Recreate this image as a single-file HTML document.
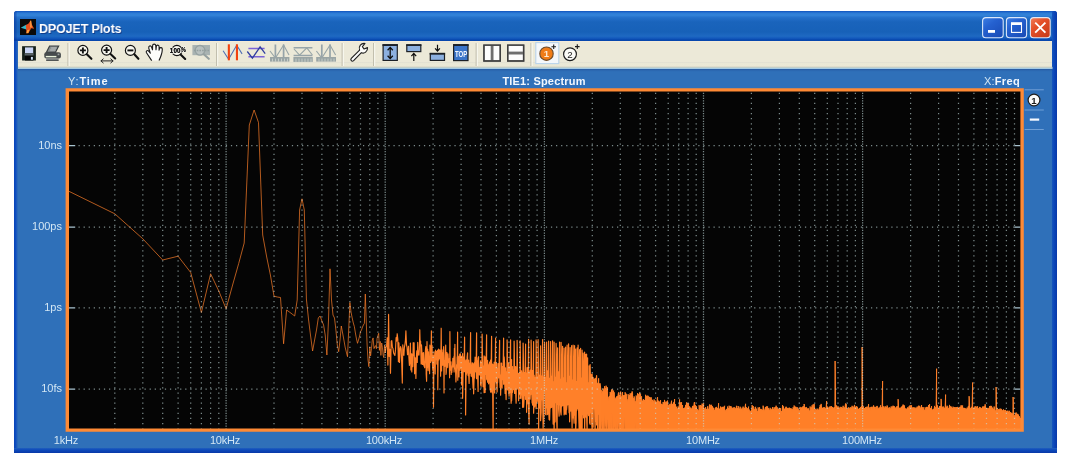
<!DOCTYPE html>
<html lang="en">
<head>
<meta charset="utf-8">
<title>DPOJET Plots</title>
<style>
html,body{margin:0;padding:0;background:#fff;}
body{width:1068px;height:463px;position:relative;overflow:hidden;font-family:"Liberation Sans",Arial,sans-serif;}
.win{position:absolute;left:14px;top:11px;width:1043px;height:442px;background:#2f70b9;overflow:hidden;border-radius:3px 3px 0 0;}
.bl{position:absolute;left:0;top:30px;width:4px;bottom:0;background:linear-gradient(90deg,#0a44b6 0,#0d4fc2 50%,#2462b8 75%,#2d6cb8 100%);}
.br{position:absolute;right:0;top:0;width:4.6px;height:100%;background:linear-gradient(90deg,#1656bd 0,#0b46b8 45%,#0838a8 100%);}
.bb{position:absolute;left:0;bottom:0;width:100%;height:5px;background:linear-gradient(180deg,#215fbd 0,#0c49ba 40%,#0838a8 100%);}
.title{position:absolute;left:0;top:0;width:100%;height:30px;
 background:linear-gradient(90deg,rgba(0,40,150,.5) 0,rgba(0,40,150,.28) 2px,rgba(0,40,150,0) 3.5px),linear-gradient(180deg,#0f52bd 0,#2d7bd6 7%,#3383d8 14%,#2470ca 22%,#1a64bc 36%,#1761b8 70%,#1e69c2 84%,#1359bc 91%,#0848ae 96%,#0646ac 100%);}
.title .cap{position:absolute;left:24.8px;top:9.5px;color:#fff;font-weight:bold;font-size:13.4px;line-height:16px;letter-spacing:-0.15px;white-space:nowrap;transform:scaleX(0.933);transform-origin:0 0;will-change:transform;text-shadow:1px 1px 0 rgba(10,30,100,.55);}
.toolbar{position:absolute;left:4px;top:30px;width:1034.6px;height:27px;background:linear-gradient(180deg,#f7ecd9 0,#ece9d8 1.5px,#ece9d8 21px,#e2e0d2 21.6px,#eae8d6 22.4px,#ebe9d7 100%);}
.client{position:absolute;left:4px;top:58px;right:4.6px;bottom:5px;background:linear-gradient(180deg,#2a66b0 0,#2f70b9 3px);}
.full{will-change:transform;position:absolute;left:0;top:0;width:1068px;height:463px;pointer-events:none;}
.lb{will-change:transform;position:absolute;color:#d2e6f4;font-size:11px;line-height:12px;white-space:nowrap;}
.lb b{color:#f2f8ff;}
</style>
</head>
<body>
<div class="win">
  <div class="title">
    <div class="cap">DPOJET Plots</div>
  </div>
  <div class="toolbar"></div>
  <div class="client"></div>
  <div class="bl"></div><div class="br"></div><div class="bb"></div>
</div>

<svg class="full" width="1068" height="463" viewBox="0 0 1068 463">
  <defs><clipPath id="pc"><rect x="68.0" y="90.5" width="953.4" height="339.0"/></clipPath></defs>
  <rect x="66.6" y="89.2" width="956.2" height="341.6" fill="#050505"/>
  <g clip-path="url(#pc)">
    <g fill="none" stroke="#ff8029" stroke-linejoin="round">
      <path d="M461.6,356.7 462.1,366.7 462.6,353.7 463.1,368.4 463.6,357.2 464.1,364.4 464.6,337.2 465.1,360.7 465.6,370.7 466.1,359.8 466.6,368.8 467.1,357.1 467.6,352.9 468.1,369.2 468.6,360.2 469.1,365.0 469.6,363.2 470.1,364.4 470.6,332.6 471.1,362.7 471.6,368.2 472.1,372.5 472.6,362.8 473.1,363.8 473.6,380.1 474.1,363.6 474.6,362.5 475.1,357.1 475.6,359.7 476.1,369.5 476.6,332.8 477.1,365.3 477.6,360.5 478.1,358.2 478.6,356.7 479.1,370.2 479.6,367.5 480.1,369.1 480.6,360.9 481.1,368.0 481.6,362.3 482.1,334.0 482.6,368.5 483.1,366.1 483.6,366.0 484.1,355.9 484.6,368.4 485.1,356.8 485.6,364.4 486.1,367.8 486.6,334.8 487.1,370.2 487.6,360.4 488.1,363.8 488.6,369.4 489.1,372.8 489.6,362.2 490.1,365.5 490.6,360.0 491.1,368.8 491.6,336.4 492.1,371.9 492.6,364.2 493.1,364.5 493.6,365.8 494.1,362.2 494.6,368.7 495.1,367.1 495.6,338.1 496.1,374.5 496.6,363.3 497.1,377.6 497.6,368.1 498.1,363.7 498.6,367.5 499.1,366.2 499.6,340.3 500.1,374.9 500.6,376.6 501.1,363.2 501.6,363.1 502.1,366.4 502.6,366.8 503.1,371.0 503.6,338.1 504.1,356.9 504.6,363.7 505.1,372.0 505.6,367.9 506.1,373.3 506.6,371.5 507.1,339.9 507.6,364.6 508.1,367.7 508.6,363.1 509.1,366.8 509.6,371.0 510.1,359.3 510.6,339.9 511.1,380.1 511.6,359.5 512.1,373.9 512.6,366.6 513.1,377.1 513.6,369.5 514.1,341.2 514.6,373.8 515.1,374.2 515.6,366.7 516.1,367.4 516.6,367.1 517.1,340.3 517.6,375.3 518.1,373.3 518.6,377.0 519.1,373.1 519.6,377.7 520.1,340.8 520.6,373.6 521.1,370.9 521.6,370.9 522.1,372.7 522.6,378.7 523.1,343.1 523.6,375.3 524.1,372.3 524.6,375.1 525.1,370.9 525.6,344.0 526.1,372.8 526.6,379.2 527.1,367.5 527.6,375.2 528.1,375.1 528.6,339.3 529.1,371.8 529.6,380.9 530.1,370.2 530.6,377.3 531.1,340.2 531.6,373.0 532.1,370.3 532.6,374.9 533.1,380.3 533.6,341.7 534.1,375.0 534.6,381.6 535.1,378.1 535.6,377.1 536.1,339.9 536.6,372.5 537.1,378.1 537.6,376.6 538.1,339.7 538.6,381.7 539.1,377.5 539.6,375.2 540.1,373.5 540.6,345.8 541.1,375.8 541.6,376.3 542.1,380.8 542.6,339.6 543.1,378.1 543.6,376.8 544.1,374.0 544.6,342.6 545.1,377.4 545.6,383.1 546.1,374.1 546.6,342.0 547.1,370.7 547.6,382.4 548.1,381.0 548.6,341.2 549.1,381.4 549.6,378.2 550.1,377.8 550.6,341.5 551.1,376.1 551.6,377.1 552.1,370.9 552.6,340.8 553.1,382.2 553.6,381.6 554.1,342.0 554.6,377.9 555.1,380.2 555.6,377.1 556.1,343.4 556.6,375.0 557.1,379.1 557.6,347.9 558.1,371.7 558.6,379.3 559.1,380.2 559.6,342.2 560.1,379.6 560.6,379.2 561.1,342.3 561.6,376.4 562.1,381.2 562.6,346.3 563.1,385.2 563.6,377.6 564.1,348.2 564.6,381.3 565.1,379.7 565.6,347.0 566.1,382.7 566.6,384.3 567.1,345.2 567.6,385.3 568.1,381.3 568.6,343.9 569.1,381.3 569.6,376.1 570.1,347.5 570.6,382.4 571.1,378.2 571.6,345.7 572.1,382.6 572.6,379.8 573.1,345.2 573.6,382.7 574.1,384.3 574.6,345.7 575.1,382.1 575.6,349.2 576.1,381.4 576.6,387.2 577.1,347.9 577.6,385.1 578.1,345.2 578.6,386.2 579.1,378.1 579.6,349.7 580.1,388.4 580.6,348.4 581.1,387.9 581.6,377.9 582.1,350.0 582.6,382.3 583.1,353.0 583.6,387.1 584.1,378.0 584.6,352.0 585.1,384.8 585.6,354.3 586.1,385.3 586.6,354.1 587.1,379.9 587.6,357.8 588.1,385.6 588.6,382.5 589.1,365.8 589.6,382.3 590.1,364.5 590.6,387.7 591.1,374.6 591.6,381.1 592.1,373.8 592.6,384.4 593.1,377.3 593.6,382.5 594.1,379.3 594.6,385.2 595.1,378.3 595.6,385.9 596.1,380.2 596.6,375.7 597.1,383.0 597.6,387.9 598.1,391.1 598.6,378.5 599.1,386.0 599.6,383.8 600.1,383.5 600.6,388.6 601.1,389.9 601.6,392.7 602.1,395.8 602.6,391.4 603.1,388.5 603.6,389.8 604.1,392.7 604.6,386.2 605.1,389.9 605.6,388.1 606.1,385.7 606.6,391.7 607.1,387.0 607.6,391.6 608.1,396.7 608.6,400.9 609.1,399.3 609.6,396.1 610.1,392.1 610.6,393.4 611.1,392.5 611.6,389.7 612.1,389.4 612.6,394.3 613.1,396.3 613.6,390.6 614.1,392.3 614.6,401.9 615.1,398.8 615.6,398.6 616.1,397.1 616.6,396.5 617.1,398.9 617.6,396.1 618.1,394.3 618.6,392.4 619.1,397.6 619.6,395.1 620.1,393.5 620.6,391.6 621.1,398.1 621.6,396.5 622.1,392.9 622.6,392.0 623.1,395.8 623.6,395.4 624.1,395.1 624.6,395.7 625.1,392.3 625.6,394.6 626.1,393.7 626.6,396.8 627.1,399.3 627.6,403.0 628.1,394.2 628.6,398.5 629.1,397.1 629.6,395.1 630.1,393.3 630.6,395.7 631.1,393.3 631.6,393.0 632.1,391.4 632.6,393.7 633.1,398.0 633.6,399.6 634.1,396.4 634.6,400.7 635.1,403.9 635.6,401.4 636.1,395.6 636.6,396.7 637.1,397.5 637.6,393.2 638.1,395.8 638.6,394.3 639.1,394.8 639.6,392.5 640.1,397.0 640.6,393.8 641.1,397.8 641.6,396.3 642.1,400.9 642.6,400.9 643.1,399.7 643.6,399.0 644.1,401.2 644.6,400.0 645.1,403.4 645.6,394.8 646.1,399.9 646.6,396.2 647.1,395.6 647.6,398.0 648.1,395.8 648.6,398.8 649.1,401.0 649.6,396.9 650.1,402.3 650.6,397.7 651.1,397.3 651.6,401.9 652.1,402.8 652.6,399.8 653.1,400.8 653.6,403.4 654.1,399.4 654.6,404.9 655.1,400.5 655.6,403.0 656.1,401.9 656.6,402.6 657.1,399.4 657.6,397.2 658.1,404.2 658.6,400.7 659.1,405.1 659.6,401.7 660.1,402.1 660.6,400.2 661.1,405.1 661.6,403.8 662.1,409.6 662.6,404.4 663.1,402.0 663.6,404.2 664.1,404.1 664.6,399.9 665.1,402.0 665.6,405.5 666.1,401.4 666.6,402.6 667.1,402.8 667.6,400.6 668.1,404.7 668.6,407.7 669.1,408.3 669.6,404.6 670.1,403.8 670.6,408.6 671.1,403.1 671.6,400.7 672.1,404.4 672.6,403.9 673.1,404.8 673.6,402.4 674.1,404.4 674.6,399.0 675.1,405.0 675.6,404.3 676.1,408.8 676.6,406.7 677.1,408.4 677.6,409.1 678.1,406.5 678.6,408.0 679.1,407.5 679.6,399.4 680.1,404.4 680.6,402.4 681.1,403.7 681.6,402.2 682.1,408.3 682.6,405.0 683.1,408.0 683.6,408.9 684.1,410.1 684.6,407.7 685.1,409.4 685.6,405.0 686.1,405.5 686.6,402.4 687.1,403.3 687.6,403.4 688.1,405.0 688.6,403.4 689.1,407.9 689.6,406.4 690.1,410.0 690.6,407.6 691.1,408.4 691.6,409.1 692.1,408.1 692.6,405.9 693.1,406.2 693.6,405.9 694.1,402.8 694.6,402.1 695.1,405.4 695.6,405.2 696.1,409.0 696.6,406.3 697.1,409.0 697.6,409.4 698.1,410.6 698.6,410.7 699.1,405.2 699.6,408.3 700.1,407.3 700.6,405.1 701.1,410.1 701.6,405.7 702.1,403.6 702.6,405.4 703.1,410.2 703.6,403.5 704.1,408.6 704.6,408.9 705.1,408.0 705.6,407.2 706.1,413.5 706.6,409.1 707.1,409.1 707.6,406.3 708.1,410.3 708.6,408.9 709.1,406.9 709.6,404.6 710.1,404.8 710.6,406.5 711.1,407.7 711.6,404.8 712.1,406.3 712.6,406.6 713.1,407.8 713.6,408.0 714.1,410.8 714.6,409.9 715.1,407.9 715.6,407.7 716.1,407.4 716.6,407.1 717.1,408.0 717.6,408.6 718.1,409.5 718.6,403.2 719.1,409.2 719.6,408.7 720.1,410.0 720.6,406.5 721.1,407.5 721.6,408.0 722.1,406.9 722.6,407.2 723.1,407.1 723.6,407.4 724.1,406.5 724.6,405.8 725.1,410.1 725.6,412.3 726.1,409.7 726.6,408.9 727.1,412.6 727.6,406.5 728.1,407.9 728.6,408.7 729.1,405.7 729.6,407.8 730.1,409.9 730.6,406.3 731.1,406.4 731.6,410.1 732.1,407.9 732.6,409.4 733.1,407.6 733.6,409.2 734.1,407.1 734.6,409.6 735.1,409.3 735.6,408.4 736.1,407.8 736.6,405.8 737.1,408.0 737.6,409.4 738.1,406.0 738.6,408.3 739.1,409.1 739.6,408.8 740.1,406.7 740.6,410.1 741.1,409.2 741.6,409.2 742.1,407.7 742.6,411.4 743.1,406.6 743.6,410.9 744.1,408.0 744.6,408.3 745.1,406.8 745.6,403.8 746.1,407.0 746.6,409.5 747.1,408.1 747.6,410.5 748.1,409.1 748.6,406.6 749.1,409.5 749.6,412.5 750.1,411.0 750.6,412.2 751.1,410.2 751.6,409.5 752.1,405.1 752.6,409.0 753.1,406.0 753.6,410.1 754.1,408.9 754.6,410.8 755.1,407.4 755.6,406.8 756.1,408.6 756.6,409.1 757.1,413.9 757.6,411.2 758.1,407.4 758.6,409.3 759.1,410.0 759.6,407.2 760.1,409.1 760.6,409.1 761.1,409.4 761.6,409.3 762.1,410.4 762.6,409.8 763.1,405.7 763.6,409.2 764.1,409.5 764.6,412.3 765.1,408.1 765.6,406.9 766.1,409.9 766.6,406.4 767.1,409.6 767.6,406.4 768.1,408.3 768.6,408.3 769.1,409.5 769.6,410.7 770.1,407.8 770.6,410.5 771.1,409.2 771.6,409.7 772.1,408.9 772.6,407.1 773.1,408.8 773.6,409.6 774.1,407.2 774.6,409.7 775.1,409.2 775.6,407.2 776.1,405.7 776.6,409.1 777.1,407.2 777.6,410.3 778.1,410.1 778.6,409.0 779.1,408.3 779.6,409.3 780.1,408.6 780.6,408.0 781.1,412.4 781.6,411.2 782.1,410.5 782.6,405.1 783.1,409.1 783.6,406.4 784.1,409.9 784.6,408.9 785.1,408.2 785.6,407.5 786.1,406.7 786.6,407.5 787.1,408.8 787.6,408.2 788.1,407.9 788.6,409.5 789.1,407.7 789.6,407.9 790.1,408.1 790.6,408.8 791.1,409.0 791.6,408.6 792.1,412.0 792.6,409.2 793.1,407.3 793.6,408.8 794.1,405.5 794.6,408.1 795.1,406.6 795.6,408.3 796.1,406.9 796.6,410.2 797.1,408.8 797.6,407.4 798.1,408.6 798.6,411.2 799.1,410.2 799.6,411.5 800.1,406.9 800.6,410.2 801.1,407.6 801.6,408.0 802.1,407.0 802.6,408.1 803.1,406.0 803.6,408.2 804.1,404.0 804.6,406.8 805.1,410.0 805.6,407.5 806.1,407.5 806.6,407.3 807.1,408.4 807.6,409.0 808.1,408.6 808.6,408.5 809.1,411.2 809.6,410.6 810.1,406.5 810.6,409.6 811.1,410.8 811.6,407.4 812.1,405.3 812.6,409.5 813.1,404.4 813.6,410.0 814.1,403.9 814.6,410.3 815.1,410.9 815.6,409.1 816.1,411.9 816.6,409.8 817.1,408.6 817.6,410.1 818.1,410.5 818.6,409.7 819.1,408.7 819.6,407.2 820.1,405.1 820.6,406.1 821.1,403.9 821.6,408.4 822.1,408.0 822.6,408.1 823.1,407.4 823.6,407.6 824.1,410.3 824.6,407.3 825.1,408.6 825.6,408.4 826.1,408.1 826.6,401.0 827.1,408.3 827.6,406.6 828.1,407.4 828.6,409.7 829.1,409.6 829.6,407.1 830.1,406.2 830.6,408.6 831.1,408.0 831.6,406.2 832.1,408.4 832.6,407.1 833.1,408.0 833.6,409.0 834.1,407.0 834.6,408.2 835.1,361.0 835.6,408.5 836.1,410.7 836.6,405.4 837.1,406.6 837.6,407.9 838.1,406.4 838.6,409.8 839.1,408.1 839.6,408.6 840.1,406.9 840.6,410.6 841.1,406.9 841.6,407.8 842.1,408.5 842.6,407.8 843.1,405.8 843.6,410.3 844.1,407.7 844.6,407.7 845.1,406.2 845.6,403.5 846.1,404.1 846.6,406.8 847.1,409.3 847.6,409.5 848.1,408.1 848.6,407.5 849.1,407.7 849.6,409.8 850.1,410.4 850.6,407.3 851.1,408.6 851.6,407.6 852.1,405.8 852.6,409.0 853.1,406.7 853.6,409.3 854.1,406.3 854.6,404.9 855.1,407.0 855.6,407.6 856.1,406.0 856.6,406.9 857.1,406.7 857.6,407.8 858.1,409.3 858.6,409.3 859.1,408.6 859.6,408.1 860.1,407.9 860.6,407.2 861.1,406.9 861.6,406.3 862.1,347.0 862.6,407.2 863.1,407.8 863.6,406.4 864.1,408.6 864.6,408.0 865.1,408.8 865.6,407.2 866.1,409.9 866.6,407.3 867.1,406.6 867.6,410.9 868.1,408.1 868.6,404.1 869.1,407.7 869.6,409.4 870.1,407.1 870.6,410.7 871.1,406.9 871.6,408.1 872.1,406.7 872.6,408.9 873.1,409.7 873.6,405.4 874.1,406.8 874.6,407.7 875.1,406.8 875.6,408.4 876.1,409.6 876.6,406.6 877.1,405.9 877.6,408.9 878.1,409.0 878.6,408.4 879.1,407.4 879.6,408.0 880.1,407.4 880.6,405.3 881.1,407.0 881.6,408.8 882.1,407.5 882.6,381.0 883.1,406.9 883.6,406.4 884.1,408.6 884.6,407.6 885.1,406.3 885.6,407.9 886.1,406.7 886.6,408.7 887.1,405.5 887.6,407.4 888.1,408.0 888.6,409.1 889.1,407.2 889.6,407.9 890.1,409.3 890.6,408.4 891.1,406.6 891.6,410.6 892.1,406.3 892.6,408.8 893.1,405.7 893.6,407.1 894.1,406.1 894.6,407.4 895.1,407.5 895.6,408.8 896.1,407.9 896.6,406.9 897.1,406.0 897.6,410.6 898.1,399.2 898.6,408.2 899.1,408.2 899.6,407.9 900.1,408.5 900.6,408.1 901.1,406.9 901.6,407.1 902.1,406.2 902.6,405.7 903.1,404.6 903.6,405.2 904.1,405.3 904.6,407.0 905.1,408.3 905.6,409.2 906.1,408.8 906.6,409.4 907.1,408.2 907.6,407.6 908.1,407.5 908.6,408.4 909.1,406.1 909.6,407.4 910.1,405.1 910.6,408.0 911.1,407.6 911.6,405.3 912.1,408.5 912.6,407.5 913.1,408.3 913.6,407.4 914.1,408.1 914.6,407.8 915.1,407.6 915.6,409.6 916.1,408.9 916.6,407.8 917.1,406.7 917.6,409.0 918.1,406.6 918.6,405.7 919.1,406.3 919.6,406.0 920.1,408.0 920.6,407.7 921.1,406.7 921.6,405.0 922.1,407.2 922.6,409.8 923.1,407.1 923.6,410.0 924.1,409.7 924.6,411.0 925.1,407.3 925.6,409.4 926.1,410.4 926.6,406.9 927.1,409.9 927.6,407.2 928.1,407.4 928.6,405.0 929.1,408.1 929.6,404.1 930.1,409.7 930.6,408.0 931.1,408.5 931.6,406.1 932.1,409.5 932.6,410.2 933.1,409.2 933.6,409.0 934.1,409.4 934.6,405.9 935.1,407.4 935.6,407.5 936.1,408.8 936.6,368.7 937.1,405.6 937.6,405.6 938.1,408.6 938.6,410.3 939.1,408.4 939.6,406.1 940.1,406.0 940.6,407.1 941.1,398.9 941.6,408.7 942.1,406.9 942.6,408.5 943.1,406.4 943.6,407.9 944.1,409.3 944.6,407.7 945.1,408.8 945.6,394.6 946.1,407.8 946.6,406.9 947.1,405.7 947.6,408.1 948.1,408.9 948.6,408.3 949.1,407.5 949.6,404.9 950.1,407.3 950.6,406.3 951.1,407.8 951.6,406.7 952.1,408.1 952.6,408.1 953.1,406.7 953.6,408.2 954.1,408.0 954.6,407.4 955.1,407.1 955.6,408.3 956.1,409.0 956.6,407.3 957.1,407.4 957.6,406.9 958.1,407.7 958.6,408.2 959.1,407.4 959.6,407.2 960.1,409.0 960.6,406.7 961.1,405.2 961.6,406.9 962.1,406.2 962.6,405.5 963.1,408.3 963.6,407.9 964.1,409.4 964.6,407.9 965.1,408.3 965.6,409.8 966.1,408.6 966.6,409.8 967.1,407.7 967.6,408.3 968.1,406.4 968.6,406.3 969.1,396.2 969.6,405.0 970.1,408.3 970.6,408.6 971.1,407.8 971.6,406.8 972.1,408.3 972.6,382.5 973.1,409.0 973.6,407.7 974.1,408.5 974.6,407.5 975.1,406.2 975.6,408.9 976.1,406.5 976.6,407.2 977.1,409.0 977.6,406.3 978.1,407.9 978.6,410.0 979.1,409.5 979.6,406.9 980.1,409.4 980.6,407.4 981.1,409.0 981.6,408.3 982.1,408.6 982.6,406.6 983.1,407.6 983.6,406.5 984.1,407.5 984.6,406.4 985.1,404.3 985.6,408.2 986.1,408.4 986.6,408.3 987.1,407.9 987.6,409.7 988.1,408.6 988.6,408.4 989.1,409.0 989.6,406.1 990.1,406.1 990.6,406.0 991.1,406.9 991.6,405.9 992.1,409.5 992.6,407.6 993.1,409.9 993.6,408.8 994.1,406.5 994.6,408.9 995.1,410.3 995.6,411.2 996.1,387.0 996.6,409.0 997.1,408.1 997.6,411.8 998.1,410.2 998.6,409.2 999.1,409.9 999.6,409.4 1000.1,408.5 1000.6,411.1 1001.1,409.1 1001.6,409.2 1002.1,410.3 1002.6,411.1 1003.1,409.9 1003.6,409.4 1004.1,410.0 1004.6,411.4 1005.1,412.2 1005.6,409.9 1006.1,411.4 1006.6,411.0 1007.1,413.2 1007.6,410.7 1008.1,412.3 1008.6,411.7 1009.1,410.7 1009.6,412.2 1010.1,412.9 1010.6,412.2 1011.1,412.7 1011.6,413.4 1012.1,413.3 1012.6,414.4 1013.1,397.0 1013.6,415.9 1014.1,416.3 1014.6,415.4 1015.1,414.8 1015.6,413.1 1016.1,412.5 1016.6,415.4 1017.1,414.8 1017.6,413.8 1018.1,415.4 1018.6,414.6 1019.1,416.1 1019.6,418.0 1020.1,418.4 1020.6,418.0 1021.1,418.7 1021.6,418.3 1021.6,431.5 1021.1,431.5 1020.6,431.5 1020.1,431.5 1019.6,431.5 1019.1,431.5 1018.6,431.5 1018.1,431.5 1017.6,431.5 1017.1,431.5 1016.6,431.5 1016.1,431.5 1015.6,431.5 1015.1,431.5 1014.6,431.5 1014.1,431.5 1013.6,431.5 1013.1,431.5 1012.6,431.5 1012.1,431.5 1011.6,431.5 1011.1,431.5 1010.6,431.5 1010.1,431.5 1009.6,431.5 1009.1,431.5 1008.6,431.5 1008.1,431.5 1007.6,431.5 1007.1,431.5 1006.6,431.5 1006.1,431.5 1005.6,431.5 1005.1,431.5 1004.6,431.5 1004.1,431.5 1003.6,431.5 1003.1,431.5 1002.6,431.5 1002.1,431.5 1001.6,431.5 1001.1,431.5 1000.6,431.5 1000.1,431.5 999.6,431.5 999.1,431.5 998.6,431.5 998.1,431.5 997.6,431.5 997.1,431.5 996.6,431.5 996.1,431.5 995.6,431.5 995.1,431.5 994.6,431.5 994.1,431.5 993.6,431.5 993.1,431.5 992.6,431.5 992.1,431.5 991.6,431.5 991.1,431.5 990.6,431.5 990.1,431.5 989.6,431.5 989.1,431.5 988.6,431.5 988.1,431.5 987.6,431.5 987.1,431.5 986.6,431.5 986.1,431.5 985.6,431.5 985.1,431.5 984.6,431.5 984.1,431.5 983.6,431.5 983.1,431.5 982.6,431.5 982.1,431.5 981.6,431.5 981.1,431.5 980.6,431.5 980.1,431.5 979.6,431.5 979.1,431.5 978.6,431.5 978.1,431.5 977.6,431.5 977.1,431.5 976.6,431.5 976.1,431.5 975.6,431.5 975.1,431.5 974.6,431.5 974.1,431.5 973.6,431.5 973.1,431.5 972.6,431.5 972.1,431.5 971.6,431.5 971.1,431.5 970.6,431.5 970.1,431.5 969.6,431.5 969.1,431.5 968.6,431.5 968.1,431.5 967.6,431.5 967.1,431.5 966.6,431.5 966.1,431.5 965.6,431.5 965.1,431.5 964.6,431.5 964.1,431.5 963.6,431.5 963.1,431.5 962.6,431.5 962.1,431.5 961.6,431.5 961.1,431.5 960.6,431.5 960.1,431.5 959.6,431.5 959.1,431.5 958.6,431.5 958.1,431.5 957.6,431.5 957.1,431.5 956.6,431.5 956.1,431.5 955.6,431.5 955.1,431.5 954.6,431.5 954.1,431.5 953.6,431.5 953.1,431.5 952.6,431.5 952.1,431.5 951.6,431.5 951.1,431.5 950.6,431.5 950.1,431.5 949.6,431.5 949.1,431.5 948.6,431.5 948.1,431.5 947.6,431.5 947.1,431.5 946.6,431.5 946.1,431.5 945.6,431.5 945.1,431.5 944.6,431.5 944.1,431.5 943.6,431.5 943.1,431.5 942.6,431.5 942.1,431.5 941.6,431.5 941.1,431.5 940.6,431.5 940.1,431.5 939.6,431.5 939.1,431.5 938.6,431.5 938.1,431.5 937.6,431.5 937.1,431.5 936.6,431.5 936.1,431.5 935.6,431.5 935.1,431.5 934.6,431.5 934.1,431.5 933.6,431.5 933.1,431.5 932.6,431.5 932.1,431.5 931.6,431.5 931.1,431.5 930.6,431.5 930.1,431.5 929.6,431.5 929.1,431.5 928.6,431.5 928.1,431.5 927.6,431.5 927.1,431.5 926.6,431.5 926.1,431.5 925.6,431.5 925.1,431.5 924.6,431.5 924.1,431.5 923.6,431.5 923.1,431.5 922.6,431.5 922.1,431.5 921.6,431.5 921.1,431.5 920.6,431.5 920.1,431.5 919.6,431.5 919.1,431.5 918.6,431.5 918.1,431.5 917.6,431.5 917.1,431.5 916.6,431.5 916.1,431.5 915.6,431.5 915.1,431.5 914.6,431.5 914.1,431.5 913.6,431.5 913.1,431.5 912.6,431.5 912.1,431.5 911.6,431.5 911.1,431.5 910.6,431.5 910.1,431.5 909.6,431.5 909.1,431.5 908.6,431.5 908.1,431.5 907.6,431.5 907.1,431.5 906.6,431.5 906.1,431.5 905.6,431.5 905.1,431.5 904.6,431.5 904.1,431.5 903.6,431.5 903.1,431.5 902.6,431.5 902.1,431.5 901.6,431.5 901.1,431.5 900.6,431.5 900.1,431.5 899.6,431.5 899.1,431.5 898.6,431.5 898.1,431.5 897.6,431.5 897.1,431.5 896.6,431.5 896.1,431.5 895.6,431.5 895.1,431.5 894.6,431.5 894.1,431.5 893.6,431.5 893.1,431.5 892.6,431.5 892.1,431.5 891.6,431.5 891.1,431.5 890.6,431.5 890.1,431.5 889.6,431.5 889.1,431.5 888.6,431.5 888.1,431.5 887.6,431.5 887.1,431.5 886.6,431.5 886.1,431.5 885.6,431.5 885.1,431.5 884.6,431.5 884.1,431.5 883.6,431.5 883.1,431.5 882.6,431.5 882.1,431.5 881.6,431.5 881.1,431.5 880.6,431.5 880.1,431.5 879.6,431.5 879.1,431.5 878.6,431.5 878.1,431.5 877.6,431.5 877.1,431.5 876.6,431.5 876.1,431.5 875.6,431.5 875.1,431.5 874.6,431.5 874.1,431.5 873.6,431.5 873.1,431.5 872.6,431.5 872.1,431.5 871.6,431.5 871.1,431.5 870.6,431.5 870.1,431.5 869.6,431.5 869.1,431.5 868.6,431.5 868.1,431.5 867.6,431.5 867.1,431.5 866.6,431.5 866.1,431.5 865.6,431.5 865.1,431.5 864.6,431.5 864.1,431.5 863.6,431.5 863.1,431.5 862.6,431.5 862.1,431.5 861.6,431.5 861.1,431.5 860.6,431.5 860.1,431.5 859.6,431.5 859.1,431.5 858.6,431.5 858.1,431.5 857.6,431.5 857.1,431.5 856.6,431.5 856.1,431.5 855.6,431.5 855.1,431.5 854.6,431.5 854.1,431.5 853.6,431.5 853.1,431.5 852.6,431.5 852.1,431.5 851.6,431.5 851.1,431.5 850.6,431.5 850.1,431.5 849.6,431.5 849.1,431.5 848.6,431.5 848.1,431.5 847.6,431.5 847.1,431.5 846.6,431.5 846.1,431.5 845.6,431.5 845.1,431.5 844.6,431.5 844.1,431.5 843.6,431.5 843.1,431.5 842.6,431.5 842.1,431.5 841.6,431.5 841.1,431.5 840.6,431.5 840.1,431.5 839.6,431.5 839.1,431.5 838.6,431.5 838.1,431.5 837.6,431.5 837.1,431.5 836.6,431.5 836.1,431.5 835.6,431.5 835.1,431.5 834.6,431.5 834.1,431.5 833.6,431.5 833.1,431.5 832.6,431.5 832.1,431.5 831.6,431.5 831.1,431.5 830.6,431.5 830.1,431.5 829.6,431.5 829.1,431.5 828.6,431.5 828.1,431.5 827.6,431.5 827.1,431.5 826.6,431.5 826.1,431.5 825.6,431.5 825.1,431.5 824.6,431.5 824.1,431.5 823.6,431.5 823.1,431.5 822.6,431.5 822.1,431.5 821.6,431.5 821.1,431.5 820.6,431.5 820.1,431.5 819.6,431.5 819.1,431.5 818.6,431.5 818.1,431.5 817.6,431.5 817.1,431.5 816.6,431.5 816.1,431.5 815.6,431.5 815.1,431.5 814.6,431.5 814.1,431.5 813.6,431.5 813.1,431.5 812.6,431.5 812.1,431.5 811.6,431.5 811.1,431.5 810.6,431.5 810.1,431.5 809.6,431.5 809.1,431.5 808.6,431.5 808.1,431.5 807.6,431.5 807.1,431.5 806.6,431.5 806.1,431.5 805.6,431.5 805.1,431.5 804.6,431.5 804.1,431.5 803.6,431.5 803.1,431.5 802.6,431.5 802.1,431.5 801.6,431.5 801.1,431.5 800.6,431.5 800.1,431.5 799.6,431.5 799.1,431.5 798.6,431.5 798.1,431.5 797.6,431.5 797.1,431.5 796.6,431.5 796.1,431.5 795.6,431.5 795.1,431.5 794.6,431.5 794.1,431.5 793.6,431.5 793.1,431.5 792.6,431.5 792.1,431.5 791.6,431.5 791.1,431.5 790.6,431.5 790.1,431.5 789.6,431.5 789.1,431.5 788.6,431.5 788.1,431.5 787.6,431.5 787.1,431.5 786.6,431.5 786.1,431.5 785.6,431.5 785.1,431.5 784.6,431.5 784.1,431.5 783.6,431.5 783.1,431.5 782.6,431.5 782.1,431.5 781.6,431.5 781.1,431.5 780.6,431.5 780.1,431.5 779.6,431.5 779.1,431.5 778.6,431.5 778.1,431.5 777.6,431.5 777.1,431.5 776.6,431.5 776.1,431.5 775.6,431.5 775.1,431.5 774.6,431.5 774.1,431.5 773.6,431.5 773.1,431.5 772.6,431.5 772.1,431.5 771.6,431.5 771.1,431.5 770.6,431.5 770.1,431.5 769.6,431.5 769.1,431.5 768.6,431.5 768.1,431.5 767.6,431.5 767.1,431.5 766.6,431.5 766.1,431.5 765.6,431.5 765.1,431.5 764.6,431.5 764.1,431.5 763.6,431.5 763.1,431.5 762.6,431.5 762.1,431.5 761.6,431.5 761.1,431.5 760.6,431.5 760.1,431.5 759.6,431.5 759.1,431.5 758.6,431.5 758.1,431.5 757.6,431.5 757.1,431.5 756.6,431.5 756.1,431.5 755.6,431.5 755.1,431.5 754.6,431.5 754.1,431.5 753.6,431.5 753.1,431.5 752.6,431.5 752.1,431.5 751.6,431.5 751.1,431.5 750.6,431.5 750.1,431.5 749.6,431.5 749.1,431.5 748.6,431.5 748.1,431.5 747.6,431.5 747.1,431.5 746.6,431.5 746.1,431.5 745.6,431.5 745.1,431.5 744.6,431.5 744.1,431.5 743.6,431.5 743.1,431.5 742.6,431.5 742.1,431.5 741.6,431.5 741.1,431.5 740.6,431.5 740.1,431.5 739.6,431.5 739.1,431.5 738.6,431.5 738.1,431.5 737.6,431.5 737.1,431.5 736.6,431.5 736.1,431.5 735.6,431.5 735.1,431.5 734.6,431.5 734.1,431.5 733.6,431.5 733.1,431.5 732.6,431.5 732.1,431.5 731.6,431.5 731.1,431.5 730.6,431.5 730.1,431.5 729.6,431.5 729.1,431.5 728.6,431.5 728.1,431.5 727.6,431.5 727.1,431.5 726.6,431.5 726.1,431.5 725.6,431.5 725.1,431.5 724.6,431.5 724.1,431.5 723.6,431.5 723.1,431.5 722.6,431.5 722.1,431.5 721.6,431.5 721.1,431.5 720.6,431.5 720.1,431.5 719.6,431.5 719.1,431.5 718.6,431.5 718.1,431.5 717.6,431.5 717.1,431.5 716.6,431.5 716.1,431.5 715.6,431.5 715.1,431.5 714.6,431.5 714.1,431.5 713.6,431.5 713.1,431.5 712.6,431.5 712.1,431.5 711.6,431.5 711.1,431.5 710.6,431.5 710.1,431.5 709.6,431.5 709.1,431.5 708.6,431.5 708.1,431.5 707.6,431.5 707.1,431.5 706.6,431.5 706.1,431.5 705.6,431.5 705.1,431.5 704.6,431.5 704.1,431.5 703.6,431.5 703.1,431.5 702.6,431.5 702.1,431.5 701.6,431.5 701.1,431.5 700.6,431.5 700.1,431.5 699.6,431.5 699.1,431.5 698.6,431.5 698.1,431.5 697.6,431.5 697.1,431.5 696.6,431.5 696.1,431.5 695.6,431.5 695.1,431.5 694.6,431.5 694.1,431.5 693.6,431.5 693.1,431.5 692.6,431.5 692.1,431.5 691.6,431.5 691.1,431.5 690.6,431.5 690.1,431.5 689.6,431.5 689.1,431.5 688.6,431.5 688.1,431.5 687.6,431.5 687.1,431.5 686.6,431.5 686.1,431.5 685.6,431.5 685.1,431.5 684.6,431.5 684.1,431.5 683.6,431.5 683.1,431.5 682.6,431.5 682.1,431.5 681.6,431.5 681.1,431.5 680.6,431.5 680.1,431.5 679.6,431.5 679.1,431.5 678.6,431.5 678.1,431.5 677.6,431.5 677.1,431.5 676.6,431.5 676.1,431.5 675.6,431.5 675.1,431.5 674.6,431.5 674.1,431.5 673.6,431.5 673.1,431.5 672.6,431.5 672.1,431.5 671.6,431.5 671.1,431.5 670.6,431.5 670.1,431.5 669.6,431.5 669.1,431.5 668.6,431.5 668.1,431.5 667.6,431.5 667.1,431.5 666.6,431.5 666.1,431.5 665.6,431.5 665.1,431.5 664.6,431.5 664.1,431.5 663.6,431.5 663.1,431.5 662.6,431.5 662.1,431.5 661.6,431.5 661.1,431.5 660.6,431.5 660.1,431.5 659.6,431.5 659.1,431.5 658.6,431.5 658.1,431.5 657.6,431.5 657.1,431.5 656.6,431.5 656.1,431.5 655.6,431.5 655.1,431.5 654.6,431.5 654.1,431.5 653.6,431.5 653.1,431.5 652.6,431.5 652.1,431.5 651.6,431.5 651.1,431.5 650.6,431.5 650.1,431.5 649.6,431.5 649.1,431.5 648.6,431.5 648.1,431.5 647.6,431.5 647.1,431.5 646.6,431.5 646.1,431.5 645.6,431.5 645.1,431.5 644.6,431.5 644.1,431.5 643.6,431.5 643.1,431.5 642.6,431.5 642.1,431.5 641.6,431.5 641.1,431.5 640.6,431.5 640.1,431.5 639.6,431.5 639.1,431.5 638.6,427.7 638.1,431.5 637.6,431.5 637.1,431.5 636.6,430.8 636.1,431.5 635.6,431.5 635.1,422.6 634.6,431.5 634.1,427.2 633.6,431.5 633.1,431.5 632.6,431.5 632.1,431.5 631.6,431.5 631.1,431.5 630.6,431.5 630.1,431.5 629.6,431.5 629.1,431.5 628.6,431.5 628.1,431.5 627.6,431.5 627.1,429.6 626.6,431.5 626.1,431.5 625.6,426.5 625.1,431.5 624.6,416.2 624.1,431.5 623.6,431.5 623.1,426.8 622.6,430.6 622.1,431.5 621.6,430.2 621.1,431.5 620.6,431.5 620.1,431.5 619.6,431.5 619.1,431.5 618.6,424.2 618.1,422.2 617.6,431.5 617.1,431.5 616.6,431.5 616.1,422.2 615.6,431.4 615.1,431.5 614.6,425.7 614.1,427.6 613.6,431.5 613.1,427.2 612.6,431.5 612.1,413.1 611.6,431.5 611.1,431.5 610.6,431.5 610.1,421.9 609.6,431.5 609.1,431.5 608.6,428.8 608.1,431.5 607.6,420.1 607.1,419.6 606.6,431.5 606.1,426.5 605.6,421.4 605.1,431.5 604.6,413.8 604.1,429.1 603.6,430.7 603.1,421.3 602.6,429.3 602.1,431.5 601.6,422.1 601.1,418.2 600.6,431.5 600.1,419.9 599.6,431.5 599.1,414.4 598.6,413.1 598.1,431.5 597.6,431.5 597.1,424.9 596.6,425.0 596.1,414.1 595.6,421.5 595.1,431.5 594.6,405.2 594.1,399.2 593.6,408.8 593.1,427.2 592.6,422.1 592.1,429.4 591.6,420.9 591.1,412.8 590.6,405.4 590.1,424.4 589.6,422.7 589.1,411.9 588.6,415.6 588.1,413.8 587.6,409.8 587.1,431.5 586.6,413.9 586.1,417.1 585.6,410.9 585.1,407.8 584.6,431.5 584.1,407.3 583.6,417.8 583.1,410.1 582.6,414.7 582.1,431.5 581.6,415.7 581.1,431.5 580.6,416.2 580.1,431.5 579.6,420.1 579.1,428.9 578.6,410.1 578.1,408.9 577.6,406.3 577.1,408.5 576.6,410.9 576.1,422.5 575.6,431.5 575.1,415.1 574.6,409.4 574.1,423.2 573.6,413.1 573.1,418.0 572.6,409.5 572.1,427.9 571.6,405.2 571.1,408.6 570.6,411.2 570.1,401.9 569.6,421.8 569.1,412.8 568.6,396.8 568.1,404.2 567.6,404.8 567.1,403.6 566.6,409.6 566.1,414.5 565.6,412.7 565.1,413.9 564.6,402.1 564.1,414.8 563.6,398.6 563.1,402.6 562.6,405.7 562.1,403.6 561.6,406.6 561.1,415.0 560.6,411.1 560.1,398.7 559.6,404.9 559.1,416.1 558.6,408.8 558.1,403.6 557.6,404.6 557.1,430.5 556.6,416.6 556.1,402.6 555.6,389.7 555.1,421.6 554.6,422.3 554.1,431.5 553.6,407.8 553.1,424.1 552.6,392.0 552.1,404.5 551.6,407.3 551.1,394.2 550.6,408.0 550.1,404.6 549.6,420.1 549.1,419.5 548.6,407.3 548.1,402.5 547.6,414.6 547.1,407.9 546.6,395.7 546.1,414.8 545.6,414.4 545.1,391.5 544.6,391.0 544.1,400.6 543.6,423.3 543.1,428.3 542.6,391.7 542.1,398.4 541.6,399.9 541.1,412.7 540.6,420.7 540.1,408.3 539.6,403.1 539.1,395.6 538.6,431.5 538.1,401.9 537.6,393.9 537.1,395.7 536.6,402.7 536.1,408.6 535.6,398.5 535.1,402.9 534.6,406.9 534.1,400.0 533.6,413.2 533.1,391.8 532.6,405.1 532.1,402.9 531.6,385.2 531.1,390.6 530.6,394.7 530.1,399.2 529.6,395.0 529.1,424.1 528.6,409.0 528.1,404.0 527.6,389.1 527.1,390.8 526.6,412.3 526.1,398.7 525.6,399.3 525.1,395.6 524.6,385.5 524.1,398.5 523.6,407.2 523.1,399.6 522.6,407.3 522.1,398.9 521.6,384.9 521.1,387.8 520.6,398.3 520.1,386.8 519.6,394.3 519.1,394.5 518.6,400.7 518.1,384.5 517.6,388.9 517.1,379.6 516.6,388.1 516.1,403.2 515.6,389.4 515.1,386.9 514.6,393.4 514.1,389.7 513.6,389.3 513.1,385.5 512.6,392.3 512.1,390.3 511.6,400.6 511.1,403.3 510.6,386.0 510.1,392.5 509.6,379.9 509.1,396.1 508.6,388.4 508.1,387.1 507.6,389.9 507.1,379.0 506.6,389.0 506.1,399.6 505.6,385.8 505.1,393.4 504.6,376.9 504.1,383.0 503.6,384.2 503.1,379.6 502.6,372.0 502.1,388.1 501.6,374.7 501.1,378.0 500.6,395.2 500.1,387.6 499.6,374.3 499.1,377.5 498.6,377.9 498.1,373.7 497.6,382.8 497.1,392.0 496.6,377.9 496.1,381.8 495.6,373.9 495.1,377.8 494.6,393.0 494.1,389.9 493.6,385.0 493.1,431.5 492.6,378.4 492.1,392.8 491.6,383.3 491.1,391.5 490.6,392.1 490.1,389.9 489.6,370.0 489.1,379.6 488.6,383.8 488.1,377.8 487.6,382.2 487.1,380.1 486.6,379.0 486.1,374.4 485.6,370.9 485.1,392.4 484.6,383.2 484.1,392.7 483.6,372.8 483.1,386.7 482.6,375.6 482.1,376.7 481.6,379.2 481.1,386.3 480.6,384.6 480.1,375.3 479.6,369.0 479.1,374.6 478.6,372.0 478.1,391.5 477.6,373.7 477.1,372.0 476.6,378.7 476.1,372.0 475.6,370.0 475.1,364.2 474.6,378.0 474.1,377.7 473.6,393.8 473.1,388.3 472.6,377.0 472.1,376.6 471.6,372.8 471.1,376.1 470.6,358.9 470.1,373.0 469.6,373.4 469.1,383.4 468.6,371.1 468.1,375.6 467.6,362.6 467.1,369.8 466.6,374.2 466.1,373.7 465.6,414.9 465.1,371.7 464.6,363.8 464.1,371.7 463.6,368.7 463.1,372.1 462.6,398.3 462.1,367.1 461.6,384.9Z" fill="#ff8029" stroke="none"/>
      <path d="M66.9,190.3 114.8,213.8 142.8,238.8 162.7,260.0 178.1,256.2 190.7,272.5 201.4,312.5 210.6,273.8 218.8,291.0 226.1,308.8 232.6,285.0 238.7,263.5 244.2,243.0 249.3,125.0 254.1,110.0 258.5,122.5 262.7,235.0 266.7,257.0 270.4,275.0 274.0,296.2 277.3,297.0 280.5,297.5 283.6,343.8 286.6,310.0 289.4,312.0 292.1,314.0 294.7,316.0 297.2,300.0 299.6,210.0 302.0,198.8 304.3,210.0 306.4,299.0 308.6,320.0 310.6,336.0 312.6,351.0 314.6,340.0 316.5,330.0 318.3,318.0 320.1,316.0 321.9,321.0 323.6,325.0 325.2,335.0 326.9,355.0 328.5,320.0 330.0,268.8 331.5,300.0 333.0,315.0 334.5,318.0 335.9,330.0 337.3,345.0 338.7,351.7 340.0,340.0 341.3,326.0 342.6,333.0 343.9,340.0 345.1,347.0 346.3,352.0 347.5,356.7 348.7,330.0 349.9,302.5 351.0,312.0 352.2,318.0 353.3,323.0 354.4,326.7 355.4,333.0 356.5,339.0 357.5,343.3 358.5,340.0 359.6,336.0 360.5,331.7 361.5,330.0 362.5,327.0 363.4,325.0 364.4,323.3 365.3,294.0 366.2,320.0 367.1,345.0 368.0,360.0 368.9,366.7 369.8,346.9 370.6,355.9 371.5,348.4 372.3,340.1 373.1,337.9 374.0,348.6 374.8,346.6 375.6,345.6 376.4,348.7 377.1,338.4 377.9,335.6 378.7,333.3 379.4,350.4 380.2,341.4 380.9,355.4 381.7,343.0 382.4,347.1 383.1,355.2 383.8,357.6 384.5,345.1 385.2,353.0" stroke-width="0.8" stroke-opacity="0.88"/>
      <path d="M385.2,353.0 385.9,346.9 386.6,346.0 387.2,337.7 387.9,365.1 388.6,314.4 389.2,356.5 389.9,349.4 390.5,373.3 391.2,341.2 391.8,340.6 392.4,347.5 393.0,348.5 393.6,353.0 394.3,354.4 394.9,355.4 395.5,349.9 396.1,337.5 396.6,341.2 397.2,333.7 397.8,339.0 398.4,361.7 398.9,342.7 399.5,362.4 400.1,349.3 400.6,346.6 401.2,348.8 401.7,363.8 402.3,383.1 402.8,344.9 403.3,351.8 403.9,355.5 404.4,347.3 404.9,344.6 405.4,340.6 405.9,330.8 406.5,344.8 407.0,347.1 407.5,354.7 408.0,353.6 408.5,346.2 408.9,357.7 409.4,365.5 409.9,361.5 410.4,343.1 410.9,370.0 411.4,353.7 411.8,371.9 412.3,354.2 412.8,366.6 413.2,342.5 413.7,355.6 414.1,342.8 414.6,373.8 415.0,357.7 415.5,358.2 415.9,378.4 416.4,356.4 416.8,350.9 417.3,362.4 417.7,342.3 418.1,350.8 418.5,354.9 419.0,355.1 419.4,348.9 419.8,329.7 420.2,345.9 420.6,341.0 421.1,364.0 421.5,344.8 421.9,351.9 422.3,364.4 422.7,364.5 423.1,352.7 423.5,352.6 423.9,366.0 424.3,365.9 424.7,367.8 425.1,356.2 425.4,350.4 425.8,346.6 426.2,374.4 426.6,381.3 427.0,341.5 427.3,367.6 427.7,349.4 428.1,370.6 428.5,351.9 428.8,363.0 429.2,363.8 429.6,373.7 429.9,345.0 430.3,353.2 430.6,362.4 431.0,353.7 431.4,330.8 431.7,361.0 432.1,345.5 432.4,364.0 432.8,370.1 433.1,355.6 433.5,407.2 433.8,373.1 434.1,351.7 434.5,364.3 434.8,356.1 435.2,373.9 435.5,350.0 435.8,359.7 436.2,359.3 436.5,351.4 436.8,364.1 437.1,355.7 437.5,350.3 437.8,389.7 438.1,363.6 438.4,349.0 438.7,360.0 439.1,350.1 439.4,358.7 439.7,349.8 440.0,353.4 440.3,351.2 440.6,376.2 440.9,360.0 441.2,328.2 441.6,370.9 441.9,349.7 442.2,360.9 442.5,352.6 442.8,365.3 443.1,360.7 443.4,350.0 443.7,346.5 444.0,393.0 444.3,360.3 444.5,365.0 444.8,366.4 445.1,357.4 445.4,351.2 445.7,345.0 446.0,374.4 446.3,372.2 446.6,360.3 446.9,352.3 447.1,363.1 447.4,364.1 447.7,367.6 448.0,353.9 448.3,359.3 448.5,361.7 448.8,362.7 449.1,358.8 449.4,367.1 449.6,377.8 449.9,331.6 450.2,366.7 450.4,370.1 450.7,362.0 451.0,361.8 451.2,374.4 451.5,367.8 451.8,372.5 452.0,370.2 452.3,366.0 452.6,364.5 452.8,358.4 453.1,367.0 453.3,361.6 453.6,364.1 453.9,356.5 454.1,372.0 454.4,348.3 454.6,368.3 454.9,344.3 455.1,360.0 455.4,369.6 455.6,370.9 455.9,381.9 456.1,379.2 456.4,372.8 456.6,364.5 456.9,367.9 457.1,356.9 457.3,358.0 457.6,332.0 457.8,380.2 458.1,355.9 458.3,361.0 458.6,362.6 458.8,359.4 459.0,377.0 459.3,356.4 459.5,361.2 459.7,354.2 460.0,367.0 460.2,370.3 460.4,353.7 460.7,368.4 460.9,358.8 461.1,355.9" stroke-width="1.15"/>
      <path d="M461.1,355.9 461.6,356.7 461.6,384.9 462.1,367.1 462.1,366.7 462.6,353.7 462.6,398.3 463.1,372.1 463.1,368.4 463.6,357.2 463.6,368.7 464.1,371.7 464.1,364.4 464.6,337.2 464.6,363.8 465.1,371.7 465.1,360.7 465.6,370.7 465.6,414.9 466.1,373.7 466.1,359.8 466.6,368.8 466.6,374.2 467.1,369.8 467.1,357.1 467.6,352.9 467.6,362.6 468.1,375.6 468.1,369.2 468.6,360.2 468.6,371.1 469.1,383.4 469.1,365.0 469.6,363.2 469.6,373.4 470.1,373.0 470.1,364.4 470.6,332.6 470.6,358.9 471.1,376.1 471.1,362.7 471.6,368.2 471.6,372.8 472.1,376.6 472.1,372.5 472.6,362.8 472.6,377.0 473.1,388.3 473.1,363.8 473.6,380.1 473.6,393.8 474.1,377.7 474.1,363.6 474.6,362.5 474.6,378.0 475.1,364.2 475.1,357.1 475.6,359.7 475.6,370.0 476.1,372.0 476.1,369.5 476.6,332.8 476.6,378.7 477.1,372.0 477.1,365.3 477.6,360.5 477.6,373.7 478.1,391.5 478.1,358.2 478.6,356.7 478.6,372.0 479.1,374.6 479.1,370.2 479.6,367.5 479.6,369.0 480.1,375.3 480.1,369.1 480.6,360.9 480.6,384.6 481.1,386.3 481.1,368.0 481.6,362.3 481.6,379.2 482.1,376.7 482.1,334.0 482.6,368.5 482.6,375.6 483.1,386.7 483.1,366.1 483.6,366.0 483.6,372.8 484.1,392.7 484.1,355.9 484.6,368.4 484.6,383.2 485.1,392.4 485.1,356.8 485.6,364.4 485.6,370.9 486.1,374.4 486.1,367.8 486.6,334.8 486.6,379.0 487.1,380.1 487.1,370.2 487.6,360.4 487.6,382.2 488.1,377.8 488.1,363.8 488.6,369.4 488.6,383.8 489.1,379.6 489.1,372.8 489.6,362.2 489.6,370.0 490.1,389.9 490.1,365.5 490.6,360.0 490.6,392.1 491.1,391.5 491.1,368.8 491.6,336.4 491.6,383.3 492.1,392.8 492.1,371.9 492.6,364.2 492.6,378.4 493.1,431.5 493.1,364.5 493.6,365.8 493.6,385.0 494.1,389.9 494.1,362.2 494.6,368.7 494.6,393.0 495.1,377.8 495.1,367.1 495.6,338.1 495.6,373.9 496.1,381.8 496.1,374.5 496.6,363.3 496.6,377.9 497.1,392.0 497.1,377.6 497.6,368.1 497.6,382.8 498.1,373.7 498.1,363.7 498.6,367.5 498.6,377.9 499.1,377.5 499.1,366.2 499.6,340.3 499.6,374.3 500.1,387.6 500.1,374.9 500.6,376.6 500.6,395.2 501.1,378.0 501.1,363.2 501.6,363.1 501.6,374.7 502.1,388.1 502.1,366.4 502.6,366.8 502.6,372.0 503.1,379.6 503.1,371.0 503.6,338.1 503.6,384.2 504.1,383.0 504.1,356.9 504.6,363.7 504.6,376.9 505.1,393.4 505.1,372.0 505.6,367.9 505.6,385.8 506.1,399.6 506.1,373.3 506.6,371.5 506.6,389.0 507.1,379.0 507.1,339.9 507.6,364.6 507.6,389.9 508.1,387.1 508.1,367.7 508.6,363.1 508.6,388.4 509.1,396.1 509.1,366.8 509.6,371.0 509.6,379.9 510.1,392.5 510.1,359.3 510.6,339.9 510.6,386.0 511.1,403.3 511.1,380.1 511.6,359.5 511.6,400.6 512.1,390.3 512.1,373.9 512.6,366.6 512.6,392.3 513.1,385.5 513.1,377.1 513.6,369.5 513.6,389.3 514.1,389.7 514.1,341.2 514.6,373.8 514.6,393.4 515.1,386.9 515.1,374.2 515.6,366.7 515.6,389.4 516.1,403.2 516.1,367.4 516.6,367.1 516.6,388.1 517.1,379.6 517.1,340.3 517.6,375.3 517.6,388.9 518.1,384.5 518.1,373.3 518.6,377.0 518.6,400.7 519.1,394.5 519.1,373.1 519.6,377.7 519.6,394.3 520.1,386.8 520.1,340.8 520.6,373.6 520.6,398.3 521.1,387.8 521.1,370.9 521.6,370.9 521.6,384.9 522.1,398.9 522.1,372.7 522.6,378.7 522.6,407.3 523.1,399.6 523.1,343.1 523.6,375.3 523.6,407.2 524.1,398.5 524.1,372.3 524.6,375.1 524.6,385.5 525.1,395.6 525.1,370.9 525.6,344.0 525.6,399.3 526.1,398.7 526.1,372.8 526.6,379.2 526.6,412.3 527.1,390.8 527.1,367.5 527.6,375.2 527.6,389.1 528.1,404.0 528.1,375.1 528.6,339.3 528.6,409.0 529.1,424.1 529.1,371.8 529.6,380.9 529.6,395.0 530.1,399.2 530.1,370.2 530.6,377.3 530.6,394.7 531.1,390.6 531.1,340.2 531.6,373.0 531.6,385.2 532.1,402.9 532.1,370.3 532.6,374.9 532.6,405.1 533.1,391.8 533.1,380.3 533.6,341.7 533.6,413.2 534.1,400.0 534.1,375.0 534.6,381.6 534.6,406.9 535.1,402.9 535.1,378.1 535.6,377.1 535.6,398.5 536.1,408.6 536.1,339.9 536.6,372.5 536.6,402.7 537.1,395.7 537.1,378.1 537.6,376.6 537.6,393.9 538.1,401.9 538.1,339.7 538.6,381.7 538.6,431.5 539.1,395.6 539.1,377.5 539.6,375.2 539.6,403.1 540.1,408.3 540.1,373.5 540.6,345.8 540.6,420.7 541.1,412.7 541.1,375.8 541.6,376.3 541.6,399.9 542.1,398.4 542.1,380.8 542.6,339.6 542.6,391.7 543.1,428.3 543.1,378.1 543.6,376.8 543.6,423.3 544.1,400.6 544.1,374.0 544.6,342.6 544.6,391.0 545.1,391.5 545.1,377.4 545.6,383.1 545.6,414.4 546.1,414.8 546.1,374.1 546.6,342.0 546.6,395.7 547.1,407.9 547.1,370.7 547.6,382.4 547.6,414.6 548.1,402.5 548.1,381.0 548.6,341.2 548.6,407.3 549.1,419.5 549.1,381.4 549.6,378.2 549.6,420.1 550.1,404.6 550.1,377.8 550.6,341.5 550.6,408.0 551.1,394.2 551.1,376.1 551.6,377.1 551.6,407.3 552.1,404.5 552.1,370.9 552.6,340.8 552.6,392.0 553.1,424.1 553.1,382.2 553.6,381.6 553.6,407.8 554.1,431.5 554.1,342.0 554.6,377.9 554.6,422.3 555.1,421.6 555.1,380.2 555.6,377.1 555.6,389.7 556.1,402.6 556.1,343.4 556.6,375.0 556.6,416.6 557.1,430.5 557.1,379.1 557.6,347.9 557.6,404.6 558.1,403.6 558.1,371.7 558.6,379.3 558.6,408.8 559.1,416.1 559.1,380.2 559.6,342.2 559.6,404.9 560.1,398.7 560.1,379.6 560.6,379.2 560.6,411.1 561.1,415.0 561.1,342.3 561.6,376.4 561.6,406.6 562.1,403.6 562.1,381.2 562.6,346.3 562.6,405.7 563.1,402.6 563.1,385.2 563.6,377.6 563.6,398.6 564.1,414.8 564.1,348.2 564.6,381.3 564.6,402.1 565.1,413.9 565.1,379.7 565.6,347.0 565.6,412.7 566.1,414.5 566.1,382.7 566.6,384.3 566.6,409.6 567.1,403.6 567.1,345.2 567.6,385.3 567.6,404.8 568.1,404.2 568.1,381.3 568.6,343.9 568.6,396.8 569.1,412.8 569.1,381.3 569.6,376.1 569.6,421.8 570.1,401.9 570.1,347.5 570.6,382.4 570.6,411.2 571.1,408.6 571.1,378.2 571.6,345.7 571.6,405.2 572.1,427.9 572.1,382.6 572.6,379.8 572.6,409.5 573.1,418.0 573.1,345.2 573.6,382.7 573.6,413.1 574.1,423.2 574.1,384.3 574.6,345.7 574.6,409.4 575.1,415.1 575.1,382.1 575.6,349.2 575.6,431.5 576.1,422.5 576.1,381.4 576.6,387.2 576.6,410.9 577.1,408.5 577.1,347.9 577.6,385.1 577.6,406.3 578.1,408.9 578.1,345.2 578.6,386.2 578.6,410.1 579.1,428.9 579.1,378.1 579.6,349.7 579.6,420.1 580.1,431.5 580.1,388.4 580.6,348.4 580.6,416.2 581.1,431.5 581.1,387.9 581.6,377.9 581.6,415.7 582.1,431.5 582.1,350.0 582.6,382.3 582.6,414.7 583.1,410.1 583.1,353.0 583.6,387.1 583.6,417.8 584.1,407.3 584.1,378.0 584.6,352.0 584.6,431.5 585.1,407.8 585.1,384.8 585.6,354.3 585.6,410.9 586.1,417.1 586.1,385.3 586.6,354.1 586.6,413.9 587.1,431.5 587.1,379.9 587.6,357.8 587.6,409.8 588.1,413.8 588.1,385.6 588.6,382.5 588.6,415.6 589.1,411.9 589.1,365.8 589.6,382.3 589.6,422.7 590.1,424.4 590.1,364.5 590.6,387.7 590.6,405.4 591.1,412.8 591.1,374.6 591.6,381.1 591.6,420.9 592.1,429.4 592.1,373.8 592.6,384.4 592.6,422.1 593.1,427.2 593.1,377.3 593.6,382.5 593.6,408.8 594.1,399.2 594.1,379.3 594.6,385.2 594.6,405.2 595.1,431.5 595.1,378.3 595.6,385.9 595.6,421.5 596.1,414.1 596.1,380.2 596.6,375.7 596.6,425.0 597.1,424.9 597.1,383.0 597.6,387.9 597.6,431.5 598.1,431.5 598.1,391.1 598.6,378.5 598.6,413.1 599.1,414.4 599.1,386.0 599.6,383.8 599.6,431.5 600.1,419.9 600.1,383.5 600.6,388.6 600.6,431.5 601.1,418.2" stroke-width="1.2"/>
      <path d="M601.1,418.2 601.1,389.9 601.6,392.7 601.6,422.1 602.1,431.5 602.1,395.8 602.6,391.4 602.6,429.3 603.1,421.3 603.1,388.5 603.6,389.8 603.6,430.7 604.1,429.1 604.1,392.7 604.6,386.2 604.6,413.8 605.1,431.5 605.1,389.9 605.6,388.1 605.6,421.4 606.1,426.5 606.1,385.7 606.6,391.7 606.6,431.5 607.1,419.6 607.1,387.0 607.6,391.6 607.6,420.1 608.1,431.5 608.1,396.7 608.6,400.9 608.6,428.8 609.1,431.5 609.1,399.3 609.6,396.1 609.6,431.5 610.1,421.9 610.1,392.1 610.6,393.4 610.6,431.5 611.1,431.5 611.1,392.5 611.6,389.7 611.6,431.5 612.1,413.1 612.1,389.4 612.6,394.3 612.6,431.5 613.1,427.2 613.1,396.3 613.6,390.6 613.6,431.5 614.1,427.6 614.1,392.3 614.6,401.9 614.6,425.7 615.1,431.5 615.1,398.8 615.6,398.6 615.6,431.4 616.1,422.2 616.1,397.1 616.6,396.5 616.6,431.5 617.1,431.5 617.1,398.9 617.6,396.1 617.6,431.5 618.1,422.2 618.1,394.3 618.6,392.4 618.6,424.2 619.1,431.5 619.1,397.6 619.6,395.1 619.6,431.5 620.1,431.5 620.1,393.5 620.6,391.6 620.6,431.5 621.1,431.5 621.1,398.1 621.6,396.5 621.6,430.2 622.1,431.5 622.1,392.9 622.6,392.0 622.6,430.6 623.1,426.8 623.1,395.8 623.6,395.4 623.6,431.5 624.1,431.5 624.1,395.1 624.6,395.7 624.6,416.2 625.1,431.5 625.1,392.3 625.6,394.6 625.6,426.5 626.1,431.5 626.1,393.7 626.6,396.8 626.6,431.5 627.1,429.6 627.1,399.3 627.6,403.0 627.6,431.5 628.1,431.5 628.1,394.2 628.6,398.5 628.6,431.5 629.1,431.5 629.1,397.1 629.6,395.1 629.6,431.5 630.1,431.5 630.1,393.3 630.6,395.7 630.6,431.5 631.1,431.5 631.1,393.3 631.6,393.0 631.6,431.5 632.1,431.5 632.1,391.4 632.6,393.7 632.6,431.5 633.1,431.5 633.1,398.0 633.6,399.6 633.6,431.5 634.1,427.2 634.1,396.4 634.6,400.7 634.6,431.5 635.1,422.6 635.1,403.9 635.6,401.4 635.6,431.5 636.1,431.5 636.1,395.6 636.6,396.7 636.6,430.8 637.1,431.5 637.1,397.5 637.6,393.2 637.6,431.5 638.1,431.5 638.1,395.8 638.6,394.3 638.6,427.7 639.1,431.5 639.1,394.8 639.6,392.5 639.6,431.5 640.1,431.5 640.1,397.0 640.6,393.8 640.6,431.5 641.1,431.5 641.1,397.8 641.6,396.3 641.6,431.5 642.1,431.5 642.1,400.9 642.6,400.9 642.6,431.5 643.1,431.5 643.1,399.7 643.6,399.0 643.6,431.5 644.1,431.5 644.1,401.2 644.6,400.0 644.6,431.5 645.1,431.5 645.1,403.4 645.6,394.8 645.6,431.5 646.1,431.5 646.1,399.9 646.6,396.2 646.6,431.5 647.1,431.5 647.1,395.6 647.6,398.0 647.6,431.5 648.1,431.5 648.1,395.8 648.6,398.8 648.6,431.5 649.1,431.5 649.1,401.0 649.6,396.9 649.6,431.5 650.1,431.5 650.1,402.3 650.6,397.7 650.6,431.5 651.1,431.5 651.1,397.3 651.6,401.9 651.6,431.5 652.1,431.5 652.1,402.8 652.6,399.8 652.6,431.5 653.1,431.5 653.1,400.8 653.6,403.4 653.6,431.5 654.1,431.5 654.1,399.4 654.6,404.9 654.6,431.5 655.1,431.5 655.1,400.5 655.6,403.0 655.6,431.5 656.1,431.5 656.1,401.9 656.6,402.6 656.6,431.5 657.1,431.5 657.1,399.4 657.6,397.2 657.6,431.5 658.1,431.5 658.1,404.2 658.6,400.7 658.6,431.5 659.1,431.5 659.1,405.1 659.6,401.7 659.6,431.5 660.1,431.5 660.1,402.1 660.6,400.2 660.6,431.5 661.1,431.5 661.1,405.1 661.6,403.8 661.6,431.5 662.1,431.5 662.1,409.6 662.6,404.4 662.6,431.5 663.1,431.5 663.1,402.0 663.6,404.2 663.6,431.5 664.1,431.5 664.1,404.1 664.6,399.9 664.6,431.5 665.1,431.5 665.1,402.0 665.6,405.5 665.6,431.5 666.1,431.5 666.1,401.4 666.6,402.6 666.6,431.5 667.1,431.5 667.1,402.8 667.6,400.6 667.6,431.5 668.1,431.5 668.1,404.7 668.6,407.7 668.6,431.5 669.1,431.5 669.1,408.3 669.6,404.6 669.6,431.5 670.1,431.5 670.1,403.8 670.6,408.6 670.6,431.5 671.1,431.5 671.1,403.1 671.6,400.7 671.6,431.5 672.1,431.5 672.1,404.4 672.6,403.9 672.6,431.5 673.1,431.5 673.1,404.8 673.6,402.4 673.6,431.5 674.1,431.5 674.1,404.4 674.6,399.0 674.6,431.5 675.1,431.5 675.1,405.0 675.6,404.3 675.6,431.5 676.1,431.5 676.1,408.8 676.6,406.7 676.6,431.5 677.1,431.5 677.1,408.4 677.6,409.1 677.6,431.5 678.1,431.5 678.1,406.5 678.6,408.0 678.6,431.5 679.1,431.5 679.1,407.5 679.6,399.4 679.6,431.5 680.1,431.5 680.1,404.4 680.6,402.4 680.6,431.5 681.1,431.5 681.1,403.7 681.6,402.2 681.6,431.5 682.1,431.5 682.1,408.3 682.6,405.0 682.6,431.5 683.1,431.5 683.1,408.0 683.6,408.9 683.6,431.5 684.1,431.5 684.1,410.1 684.6,407.7 684.6,431.5 685.1,431.5 685.1,409.4 685.6,405.0 685.6,431.5 686.1,431.5 686.1,405.5 686.6,402.4 686.6,431.5 687.1,431.5 687.1,403.3 687.6,403.4 687.6,431.5 688.1,431.5 688.1,405.0 688.6,403.4 688.6,431.5 689.1,431.5 689.1,407.9 689.6,406.4 689.6,431.5 690.1,431.5 690.1,410.0 690.6,407.6 690.6,431.5 691.1,431.5 691.1,408.4 691.6,409.1 691.6,431.5 692.1,431.5 692.1,408.1 692.6,405.9 692.6,431.5 693.1,431.5 693.1,406.2 693.6,405.9 693.6,431.5 694.1,431.5 694.1,402.8 694.6,402.1 694.6,431.5 695.1,431.5 695.1,405.4 695.6,405.2 695.6,431.5 696.1,431.5 696.1,409.0 696.6,406.3 696.6,431.5 697.1,431.5 697.1,409.0 697.6,409.4 697.6,431.5 698.1,431.5 698.1,410.6 698.6,410.7 698.6,431.5 699.1,431.5 699.1,405.2 699.6,408.3 699.6,431.5 700.1,431.5 700.1,407.3 700.6,405.1 700.6,431.5 701.1,431.5 701.1,410.1 701.6,405.7 701.6,431.5 702.1,431.5 702.1,403.6 702.6,405.4 702.6,431.5 703.1,431.5 703.1,410.2 703.6,403.5 703.6,431.5 704.1,431.5 704.1,408.6 704.6,408.9 704.6,431.5 705.1,431.5 705.1,408.0 705.6,407.2 705.6,431.5 706.1,431.5 706.1,413.5 706.6,409.1 706.6,431.5 707.1,431.5 707.1,409.1 707.6,406.3 707.6,431.5 708.1,431.5 708.1,410.3 708.6,408.9 708.6,431.5 709.1,431.5 709.1,406.9 709.6,404.6 709.6,431.5 710.1,431.5 710.1,404.8 710.6,406.5 710.6,431.5 711.1,431.5 711.1,407.7 711.6,404.8 711.6,431.5 712.1,431.5 712.1,406.3 712.6,406.6 712.6,431.5 713.1,431.5 713.1,407.8 713.6,408.0 713.6,431.5 714.1,431.5 714.1,410.8 714.6,409.9 714.6,431.5 715.1,431.5 715.1,407.9 715.6,407.7 715.6,431.5 716.1,431.5 716.1,407.4 716.6,407.1 716.6,431.5 717.1,431.5 717.1,408.0 717.6,408.6 717.6,431.5 718.1,431.5 718.1,409.5 718.6,403.2 718.6,431.5 719.1,431.5 719.1,409.2 719.6,408.7 719.6,431.5 720.1,431.5 720.1,410.0 720.6,406.5 720.6,431.5 721.1,431.5 721.1,407.5 721.6,408.0 721.6,431.5 722.1,431.5 722.1,406.9 722.6,407.2 722.6,431.5 723.1,431.5 723.1,407.1 723.6,407.4 723.6,431.5 724.1,431.5 724.1,406.5 724.6,405.8 724.6,431.5 725.1,431.5 725.1,410.1 725.6,412.3 725.6,431.5 726.1,431.5 726.1,409.7 726.6,408.9 726.6,431.5 727.1,431.5 727.1,412.6 727.6,406.5 727.6,431.5 728.1,431.5 728.1,407.9 728.6,408.7 728.6,431.5 729.1,431.5 729.1,405.7 729.6,407.8 729.6,431.5 730.1,431.5 730.1,409.9 730.6,406.3 730.6,431.5 731.1,431.5 731.1,406.4 731.6,410.1 731.6,431.5 732.1,431.5 732.1,407.9 732.6,409.4 732.6,431.5 733.1,431.5 733.1,407.6 733.6,409.2 733.6,431.5 734.1,431.5 734.1,407.1 734.6,409.6 734.6,431.5 735.1,431.5 735.1,409.3 735.6,408.4 735.6,431.5 736.1,431.5 736.1,407.8 736.6,405.8 736.6,431.5 737.1,431.5 737.1,408.0 737.6,409.4 737.6,431.5 738.1,431.5 738.1,406.0 738.6,408.3 738.6,431.5 739.1,431.5 739.1,409.1 739.6,408.8 739.6,431.5 740.1,431.5 740.1,406.7 740.6,410.1 740.6,431.5 741.1,431.5 741.1,409.2 741.6,409.2 741.6,431.5 742.1,431.5 742.1,407.7 742.6,411.4 742.6,431.5 743.1,431.5 743.1,406.6 743.6,410.9 743.6,431.5 744.1,431.5 744.1,408.0 744.6,408.3 744.6,431.5 745.1,431.5 745.1,406.8 745.6,403.8 745.6,431.5 746.1,431.5 746.1,407.0 746.6,409.5 746.6,431.5 747.1,431.5 747.1,408.1 747.6,410.5 747.6,431.5 748.1,431.5 748.1,409.1 748.6,406.6 748.6,431.5 749.1,431.5 749.1,409.5 749.6,412.5 749.6,431.5 750.1,431.5 750.1,411.0 750.6,412.2 750.6,431.5 751.1,431.5 751.1,410.2 751.6,409.5 751.6,431.5 752.1,431.5 752.1,405.1 752.6,409.0 752.6,431.5 753.1,431.5 753.1,406.0 753.6,410.1 753.6,431.5 754.1,431.5 754.1,408.9 754.6,410.8 754.6,431.5 755.1,431.5 755.1,407.4 755.6,406.8 755.6,431.5 756.1,431.5 756.1,408.6 756.6,409.1 756.6,431.5 757.1,431.5 757.1,413.9 757.6,411.2 757.6,431.5 758.1,431.5 758.1,407.4 758.6,409.3 758.6,431.5 759.1,431.5 759.1,410.0 759.6,407.2 759.6,431.5 760.1,431.5 760.1,409.1 760.6,409.1 760.6,431.5 761.1,431.5 761.1,409.4 761.6,409.3 761.6,431.5 762.1,431.5 762.1,410.4 762.6,409.8 762.6,431.5 763.1,431.5 763.1,405.7 763.6,409.2 763.6,431.5 764.1,431.5 764.1,409.5 764.6,412.3 764.6,431.5 765.1,431.5 765.1,408.1 765.6,406.9 765.6,431.5 766.1,431.5 766.1,409.9 766.6,406.4 766.6,431.5 767.1,431.5 767.1,409.6 767.6,406.4 767.6,431.5 768.1,431.5 768.1,408.3 768.6,408.3 768.6,431.5 769.1,431.5 769.1,409.5 769.6,410.7 769.6,431.5 770.1,431.5 770.1,407.8 770.6,410.5 770.6,431.5 771.1,431.5 771.1,409.2 771.6,409.7 771.6,431.5 772.1,431.5 772.1,408.9 772.6,407.1 772.6,431.5 773.1,431.5 773.1,408.8 773.6,409.6 773.6,431.5 774.1,431.5 774.1,407.2 774.6,409.7 774.6,431.5 775.1,431.5 775.1,409.2 775.6,407.2 775.6,431.5 776.1,431.5 776.1,405.7 776.6,409.1 776.6,431.5 777.1,431.5 777.1,407.2 777.6,410.3 777.6,431.5 778.1,431.5 778.1,410.1 778.6,409.0 778.6,431.5 779.1,431.5 779.1,408.3 779.6,409.3 779.6,431.5 780.1,431.5 780.1,408.6 780.6,408.0 780.6,431.5 781.1,431.5 781.1,412.4 781.6,411.2 781.6,431.5 782.1,431.5 782.1,410.5 782.6,405.1 782.6,431.5 783.1,431.5 783.1,409.1 783.6,406.4 783.6,431.5 784.1,431.5 784.1,409.9 784.6,408.9 784.6,431.5 785.1,431.5 785.1,408.2 785.6,407.5 785.6,431.5 786.1,431.5 786.1,406.7 786.6,407.5 786.6,431.5 787.1,431.5 787.1,408.8 787.6,408.2 787.6,431.5 788.1,431.5 788.1,407.9 788.6,409.5 788.6,431.5 789.1,431.5 789.1,407.7 789.6,407.9 789.6,431.5 790.1,431.5 790.1,408.1 790.6,408.8 790.6,431.5 791.1,431.5 791.1,409.0 791.6,408.6 791.6,431.5 792.1,431.5 792.1,412.0 792.6,409.2 792.6,431.5 793.1,431.5 793.1,407.3 793.6,408.8 793.6,431.5 794.1,431.5 794.1,405.5 794.6,408.1 794.6,431.5 795.1,431.5 795.1,406.6 795.6,408.3 795.6,431.5 796.1,431.5 796.1,406.9 796.6,410.2 796.6,431.5 797.1,431.5 797.1,408.8 797.6,407.4 797.6,431.5 798.1,431.5 798.1,408.6 798.6,411.2 798.6,431.5 799.1,431.5 799.1,410.2 799.6,411.5 799.6,431.5 800.1,431.5 800.1,406.9 800.6,410.2 800.6,431.5 801.1,431.5 801.1,407.6 801.6,408.0 801.6,431.5 802.1,431.5 802.1,407.0 802.6,408.1 802.6,431.5 803.1,431.5 803.1,406.0 803.6,408.2 803.6,431.5 804.1,431.5 804.1,404.0 804.6,406.8 804.6,431.5 805.1,431.5 805.1,410.0 805.6,407.5 805.6,431.5 806.1,431.5 806.1,407.5 806.6,407.3 806.6,431.5 807.1,431.5 807.1,408.4 807.6,409.0 807.6,431.5 808.1,431.5 808.1,408.6 808.6,408.5 808.6,431.5 809.1,431.5 809.1,411.2 809.6,410.6 809.6,431.5 810.1,431.5 810.1,406.5 810.6,409.6 810.6,431.5 811.1,431.5 811.1,410.8 811.6,407.4 811.6,431.5 812.1,431.5 812.1,405.3 812.6,409.5 812.6,431.5 813.1,431.5 813.1,404.4 813.6,410.0 813.6,431.5 814.1,431.5 814.1,403.9 814.6,410.3 814.6,431.5 815.1,431.5 815.1,410.9 815.6,409.1 815.6,431.5 816.1,431.5 816.1,411.9 816.6,409.8 816.6,431.5 817.1,431.5 817.1,408.6 817.6,410.1 817.6,431.5 818.1,431.5 818.1,410.5 818.6,409.7 818.6,431.5 819.1,431.5 819.1,408.7 819.6,407.2 819.6,431.5 820.1,431.5 820.1,405.1 820.6,406.1 820.6,431.5 821.1,431.5 821.1,403.9 821.6,408.4 821.6,431.5 822.1,431.5 822.1,408.0 822.6,408.1 822.6,431.5 823.1,431.5 823.1,407.4 823.6,407.6 823.6,431.5 824.1,431.5 824.1,410.3 824.6,407.3 824.6,431.5 825.1,431.5 825.1,408.6 825.6,408.4 825.6,431.5 826.1,431.5 826.1,408.1 826.6,401.0 826.6,431.5 827.1,431.5 827.1,408.3 827.6,406.6 827.6,431.5 828.1,431.5 828.1,407.4 828.6,409.7 828.6,431.5 829.1,431.5 829.1,409.6 829.6,407.1 829.6,431.5 830.1,431.5 830.1,406.2 830.6,408.6 830.6,431.5 831.1,431.5 831.1,408.0 831.6,406.2 831.6,431.5 832.1,431.5 832.1,408.4 832.6,407.1 832.6,431.5 833.1,431.5 833.1,408.0 833.6,409.0 833.6,431.5 834.1,431.5 834.1,407.0 834.6,408.2 834.6,431.5 835.1,431.5 835.1,361.0 835.6,408.5 835.6,431.5 836.1,431.5 836.1,410.7 836.6,405.4 836.6,431.5 837.1,431.5 837.1,406.6 837.6,407.9 837.6,431.5 838.1,431.5 838.1,406.4 838.6,409.8 838.6,431.5 839.1,431.5 839.1,408.1 839.6,408.6 839.6,431.5 840.1,431.5 840.1,406.9 840.6,410.6 840.6,431.5 841.1,431.5 841.1,406.9 841.6,407.8 841.6,431.5 842.1,431.5 842.1,408.5 842.6,407.8 842.6,431.5 843.1,431.5 843.1,405.8 843.6,410.3 843.6,431.5 844.1,431.5 844.1,407.7 844.6,407.7 844.6,431.5 845.1,431.5 845.1,406.2 845.6,403.5 845.6,431.5 846.1,431.5 846.1,404.1 846.6,406.8 846.6,431.5 847.1,431.5 847.1,409.3 847.6,409.5 847.6,431.5 848.1,431.5 848.1,408.1 848.6,407.5 848.6,431.5 849.1,431.5 849.1,407.7 849.6,409.8 849.6,431.5 850.1,431.5 850.1,410.4 850.6,407.3 850.6,431.5 851.1,431.5 851.1,408.6 851.6,407.6 851.6,431.5 852.1,431.5 852.1,405.8 852.6,409.0 852.6,431.5 853.1,431.5 853.1,406.7 853.6,409.3 853.6,431.5 854.1,431.5 854.1,406.3 854.6,404.9 854.6,431.5 855.1,431.5 855.1,407.0 855.6,407.6 855.6,431.5 856.1,431.5 856.1,406.0 856.6,406.9 856.6,431.5 857.1,431.5 857.1,406.7 857.6,407.8 857.6,431.5 858.1,431.5 858.1,409.3 858.6,409.3 858.6,431.5 859.1,431.5 859.1,408.6 859.6,408.1 859.6,431.5 860.1,431.5 860.1,407.9 860.6,407.2 860.6,431.5 861.1,431.5 861.1,406.9 861.6,406.3 861.6,431.5 862.1,431.5 862.1,347.0 862.6,407.2 862.6,431.5 863.1,431.5 863.1,407.8 863.6,406.4 863.6,431.5 864.1,431.5 864.1,408.6 864.6,408.0 864.6,431.5 865.1,431.5 865.1,408.8 865.6,407.2 865.6,431.5 866.1,431.5 866.1,409.9 866.6,407.3 866.6,431.5 867.1,431.5 867.1,406.6 867.6,410.9 867.6,431.5 868.1,431.5 868.1,408.1 868.6,404.1 868.6,431.5 869.1,431.5 869.1,407.7 869.6,409.4 869.6,431.5 870.1,431.5 870.1,407.1 870.6,410.7 870.6,431.5 871.1,431.5 871.1,406.9 871.6,408.1 871.6,431.5 872.1,431.5 872.1,406.7 872.6,408.9 872.6,431.5 873.1,431.5 873.1,409.7 873.6,405.4 873.6,431.5 874.1,431.5 874.1,406.8 874.6,407.7 874.6,431.5 875.1,431.5 875.1,406.8 875.6,408.4 875.6,431.5 876.1,431.5 876.1,409.6 876.6,406.6 876.6,431.5 877.1,431.5 877.1,405.9 877.6,408.9 877.6,431.5 878.1,431.5 878.1,409.0 878.6,408.4 878.6,431.5 879.1,431.5 879.1,407.4 879.6,408.0 879.6,431.5 880.1,431.5 880.1,407.4 880.6,405.3 880.6,431.5 881.1,431.5 881.1,407.0 881.6,408.8 881.6,431.5 882.1,431.5 882.1,407.5 882.6,381.0 882.6,431.5 883.1,431.5 883.1,406.9 883.6,406.4 883.6,431.5 884.1,431.5 884.1,408.6 884.6,407.6 884.6,431.5 885.1,431.5 885.1,406.3 885.6,407.9 885.6,431.5 886.1,431.5 886.1,406.7 886.6,408.7 886.6,431.5 887.1,431.5 887.1,405.5 887.6,407.4 887.6,431.5 888.1,431.5 888.1,408.0 888.6,409.1 888.6,431.5 889.1,431.5 889.1,407.2 889.6,407.9 889.6,431.5 890.1,431.5 890.1,409.3 890.6,408.4 890.6,431.5 891.1,431.5 891.1,406.6 891.6,410.6 891.6,431.5 892.1,431.5 892.1,406.3 892.6,408.8 892.6,431.5 893.1,431.5 893.1,405.7 893.6,407.1 893.6,431.5 894.1,431.5 894.1,406.1 894.6,407.4 894.6,431.5 895.1,431.5 895.1,407.5 895.6,408.8 895.6,431.5 896.1,431.5 896.1,407.9 896.6,406.9 896.6,431.5 897.1,431.5 897.1,406.0 897.6,410.6 897.6,431.5 898.1,431.5 898.1,399.2 898.6,408.2 898.6,431.5 899.1,431.5 899.1,408.2 899.6,407.9 899.6,431.5 900.1,431.5 900.1,408.5 900.6,408.1 900.6,431.5 901.1,431.5 901.1,406.9 901.6,407.1 901.6,431.5 902.1,431.5 902.1,406.2 902.6,405.7 902.6,431.5 903.1,431.5 903.1,404.6 903.6,405.2 903.6,431.5 904.1,431.5 904.1,405.3 904.6,407.0 904.6,431.5 905.1,431.5 905.1,408.3 905.6,409.2 905.6,431.5 906.1,431.5 906.1,408.8 906.6,409.4 906.6,431.5 907.1,431.5 907.1,408.2 907.6,407.6 907.6,431.5 908.1,431.5 908.1,407.5 908.6,408.4 908.6,431.5 909.1,431.5 909.1,406.1 909.6,407.4 909.6,431.5 910.1,431.5 910.1,405.1 910.6,408.0 910.6,431.5 911.1,431.5 911.1,407.6 911.6,405.3 911.6,431.5 912.1,431.5 912.1,408.5 912.6,407.5 912.6,431.5 913.1,431.5 913.1,408.3 913.6,407.4 913.6,431.5 914.1,431.5 914.1,408.1 914.6,407.8 914.6,431.5 915.1,431.5 915.1,407.6 915.6,409.6 915.6,431.5 916.1,431.5 916.1,408.9 916.6,407.8 916.6,431.5 917.1,431.5 917.1,406.7 917.6,409.0 917.6,431.5 918.1,431.5 918.1,406.6 918.6,405.7 918.6,431.5 919.1,431.5 919.1,406.3 919.6,406.0 919.6,431.5 920.1,431.5 920.1,408.0 920.6,407.7 920.6,431.5 921.1,431.5 921.1,406.7 921.6,405.0 921.6,431.5 922.1,431.5 922.1,407.2 922.6,409.8 922.6,431.5 923.1,431.5 923.1,407.1 923.6,410.0 923.6,431.5 924.1,431.5 924.1,409.7 924.6,411.0 924.6,431.5 925.1,431.5 925.1,407.3 925.6,409.4 925.6,431.5 926.1,431.5 926.1,410.4 926.6,406.9 926.6,431.5 927.1,431.5 927.1,409.9 927.6,407.2 927.6,431.5 928.1,431.5 928.1,407.4 928.6,405.0 928.6,431.5 929.1,431.5 929.1,408.1 929.6,404.1 929.6,431.5 930.1,431.5 930.1,409.7 930.6,408.0 930.6,431.5 931.1,431.5 931.1,408.5 931.6,406.1 931.6,431.5 932.1,431.5 932.1,409.5 932.6,410.2 932.6,431.5 933.1,431.5 933.1,409.2 933.6,409.0 933.6,431.5 934.1,431.5 934.1,409.4 934.6,405.9 934.6,431.5 935.1,431.5 935.1,407.4 935.6,407.5 935.6,431.5 936.1,431.5 936.1,408.8 936.6,368.7 936.6,431.5 937.1,431.5 937.1,405.6 937.6,405.6 937.6,431.5 938.1,431.5 938.1,408.6 938.6,410.3 938.6,431.5 939.1,431.5 939.1,408.4 939.6,406.1 939.6,431.5 940.1,431.5 940.1,406.0 940.6,407.1 940.6,431.5 941.1,431.5 941.1,398.9 941.6,408.7 941.6,431.5 942.1,431.5 942.1,406.9 942.6,408.5 942.6,431.5 943.1,431.5 943.1,406.4 943.6,407.9 943.6,431.5 944.1,431.5 944.1,409.3 944.6,407.7 944.6,431.5 945.1,431.5 945.1,408.8 945.6,394.6 945.6,431.5 946.1,431.5 946.1,407.8 946.6,406.9 946.6,431.5 947.1,431.5 947.1,405.7 947.6,408.1 947.6,431.5 948.1,431.5 948.1,408.9 948.6,408.3 948.6,431.5 949.1,431.5 949.1,407.5 949.6,404.9 949.6,431.5 950.1,431.5 950.1,407.3 950.6,406.3 950.6,431.5 951.1,431.5 951.1,407.8 951.6,406.7 951.6,431.5 952.1,431.5 952.1,408.1 952.6,408.1 952.6,431.5 953.1,431.5 953.1,406.7 953.6,408.2 953.6,431.5 954.1,431.5 954.1,408.0 954.6,407.4 954.6,431.5 955.1,431.5 955.1,407.1 955.6,408.3 955.6,431.5 956.1,431.5 956.1,409.0 956.6,407.3 956.6,431.5 957.1,431.5 957.1,407.4 957.6,406.9 957.6,431.5 958.1,431.5 958.1,407.7 958.6,408.2 958.6,431.5 959.1,431.5 959.1,407.4 959.6,407.2 959.6,431.5 960.1,431.5 960.1,409.0 960.6,406.7 960.6,431.5 961.1,431.5 961.1,405.2 961.6,406.9 961.6,431.5 962.1,431.5 962.1,406.2 962.6,405.5 962.6,431.5 963.1,431.5 963.1,408.3 963.6,407.9 963.6,431.5 964.1,431.5 964.1,409.4 964.6,407.9 964.6,431.5 965.1,431.5 965.1,408.3 965.6,409.8 965.6,431.5 966.1,431.5 966.1,408.6 966.6,409.8 966.6,431.5 967.1,431.5 967.1,407.7 967.6,408.3 967.6,431.5 968.1,431.5 968.1,406.4 968.6,406.3 968.6,431.5 969.1,431.5 969.1,396.2 969.6,405.0 969.6,431.5 970.1,431.5 970.1,408.3 970.6,408.6 970.6,431.5 971.1,431.5 971.1,407.8 971.6,406.8 971.6,431.5 972.1,431.5 972.1,408.3 972.6,382.5 972.6,431.5 973.1,431.5 973.1,409.0 973.6,407.7 973.6,431.5 974.1,431.5 974.1,408.5 974.6,407.5 974.6,431.5 975.1,431.5 975.1,406.2 975.6,408.9 975.6,431.5 976.1,431.5 976.1,406.5 976.6,407.2 976.6,431.5 977.1,431.5 977.1,409.0 977.6,406.3 977.6,431.5 978.1,431.5 978.1,407.9 978.6,410.0 978.6,431.5 979.1,431.5 979.1,409.5 979.6,406.9 979.6,431.5 980.1,431.5 980.1,409.4 980.6,407.4 980.6,431.5 981.1,431.5 981.1,409.0 981.6,408.3 981.6,431.5 982.1,431.5 982.1,408.6 982.6,406.6 982.6,431.5 983.1,431.5 983.1,407.6 983.6,406.5 983.6,431.5 984.1,431.5 984.1,407.5 984.6,406.4 984.6,431.5 985.1,431.5 985.1,404.3 985.6,408.2 985.6,431.5 986.1,431.5 986.1,408.4 986.6,408.3 986.6,431.5 987.1,431.5 987.1,407.9 987.6,409.7 987.6,431.5 988.1,431.5 988.1,408.6 988.6,408.4 988.6,431.5 989.1,431.5 989.1,409.0 989.6,406.1 989.6,431.5 990.1,431.5 990.1,406.1 990.6,406.0 990.6,431.5 991.1,431.5 991.1,406.9 991.6,405.9 991.6,431.5 992.1,431.5 992.1,409.5 992.6,407.6 992.6,431.5 993.1,431.5 993.1,409.9 993.6,408.8 993.6,431.5 994.1,431.5 994.1,406.5 994.6,408.9 994.6,431.5 995.1,431.5 995.1,410.3 995.6,411.2 995.6,431.5 996.1,431.5 996.1,387.0 996.6,409.0 996.6,431.5 997.1,431.5 997.1,408.1 997.6,411.8 997.6,431.5 998.1,431.5 998.1,410.2 998.6,409.2 998.6,431.5 999.1,431.5 999.1,409.9 999.6,409.4 999.6,431.5 1000.1,431.5 1000.1,408.5 1000.6,411.1 1000.6,431.5 1001.1,431.5 1001.1,409.1 1001.6,409.2 1001.6,431.5 1002.1,431.5 1002.1,410.3 1002.6,411.1 1002.6,431.5 1003.1,431.5 1003.1,409.9 1003.6,409.4 1003.6,431.5 1004.1,431.5 1004.1,410.0 1004.6,411.4 1004.6,431.5 1005.1,431.5 1005.1,412.2 1005.6,409.9 1005.6,431.5 1006.1,431.5 1006.1,411.4 1006.6,411.0 1006.6,431.5 1007.1,431.5 1007.1,413.2 1007.6,410.7 1007.6,431.5 1008.1,431.5 1008.1,412.3 1008.6,411.7 1008.6,431.5 1009.1,431.5 1009.1,410.7 1009.6,412.2 1009.6,431.5 1010.1,431.5 1010.1,412.9 1010.6,412.2 1010.6,431.5 1011.1,431.5 1011.1,412.7 1011.6,413.4 1011.6,431.5 1012.1,431.5 1012.1,413.3 1012.6,414.4 1012.6,431.5 1013.1,431.5 1013.1,397.0 1013.6,415.9 1013.6,431.5 1014.1,431.5 1014.1,416.3 1014.6,415.4 1014.6,431.5 1015.1,431.5 1015.1,414.8 1015.6,413.1 1015.6,431.5 1016.1,431.5 1016.1,412.5 1016.6,415.4 1016.6,431.5 1017.1,431.5 1017.1,414.8 1017.6,413.8 1017.6,431.5 1018.1,431.5 1018.1,415.4 1018.6,414.6 1018.6,431.5 1019.1,431.5 1019.1,416.1 1019.6,418.0 1019.6,431.5 1020.1,431.5 1020.1,418.4 1020.6,418.0 1020.6,431.5 1021.1,431.5 1021.1,418.7 1021.6,418.3 1021.6,431.5" stroke-width="0.95"/>
    </g>
    <g stroke="#c4dcdc" stroke-opacity="0.62" stroke-width="1.25" stroke-dasharray="1.25 3.83" fill="none">
      <line x1="114.8" x2="114.8" y1="92.7" y2="428.5"/><line x1="142.8" x2="142.8" y1="92.7" y2="428.5"/><line x1="162.7" x2="162.7" y1="92.7" y2="428.5"/><line x1="178.1" x2="178.1" y1="92.7" y2="428.5"/><line x1="190.7" x2="190.7" y1="92.7" y2="428.5"/><line x1="201.4" x2="201.4" y1="92.7" y2="428.5"/><line x1="210.6" x2="210.6" y1="92.7" y2="428.5"/><line x1="218.8" x2="218.8" y1="92.7" y2="428.5"/><line x1="226.1" x2="226.1" y1="92.7" y2="428.5" stroke-dasharray="1.25 1.29"/><line x1="274.0" x2="274.0" y1="92.7" y2="428.5"/><line x1="302.0" x2="302.0" y1="92.7" y2="428.5"/><line x1="321.9" x2="321.9" y1="92.7" y2="428.5"/><line x1="337.3" x2="337.3" y1="92.7" y2="428.5"/><line x1="349.9" x2="349.9" y1="92.7" y2="428.5"/><line x1="360.5" x2="360.5" y1="92.7" y2="428.5"/><line x1="369.8" x2="369.8" y1="92.7" y2="428.5"/><line x1="377.9" x2="377.9" y1="92.7" y2="428.5"/><line x1="385.2" x2="385.2" y1="92.7" y2="428.5" stroke-dasharray="1.25 1.29"/><line x1="433.1" x2="433.1" y1="92.7" y2="428.5"/><line x1="461.1" x2="461.1" y1="92.7" y2="428.5"/><line x1="481.0" x2="481.0" y1="92.7" y2="428.5"/><line x1="496.4" x2="496.4" y1="92.7" y2="428.5"/><line x1="509.0" x2="509.0" y1="92.7" y2="428.5"/><line x1="519.7" x2="519.7" y1="92.7" y2="428.5"/><line x1="528.9" x2="528.9" y1="92.7" y2="428.5"/><line x1="537.1" x2="537.1" y1="92.7" y2="428.5"/><line x1="544.4" x2="544.4" y1="92.7" y2="428.5" stroke-dasharray="1.25 1.29"/><line x1="592.3" x2="592.3" y1="92.7" y2="428.5"/><line x1="620.3" x2="620.3" y1="92.7" y2="428.5"/><line x1="640.2" x2="640.2" y1="92.7" y2="428.5"/><line x1="655.6" x2="655.6" y1="92.7" y2="428.5"/><line x1="668.2" x2="668.2" y1="92.7" y2="428.5"/><line x1="678.8" x2="678.8" y1="92.7" y2="428.5"/><line x1="688.1" x2="688.1" y1="92.7" y2="428.5"/><line x1="696.2" x2="696.2" y1="92.7" y2="428.5"/><line x1="703.5" x2="703.5" y1="92.7" y2="428.5" stroke-dasharray="1.25 1.29"/><line x1="751.4" x2="751.4" y1="92.7" y2="428.5"/><line x1="779.4" x2="779.4" y1="92.7" y2="428.5"/><line x1="799.3" x2="799.3" y1="92.7" y2="428.5"/><line x1="814.7" x2="814.7" y1="92.7" y2="428.5"/><line x1="827.3" x2="827.3" y1="92.7" y2="428.5"/><line x1="838.0" x2="838.0" y1="92.7" y2="428.5"/><line x1="847.2" x2="847.2" y1="92.7" y2="428.5"/><line x1="855.4" x2="855.4" y1="92.7" y2="428.5"/><line x1="862.6" x2="862.6" y1="92.7" y2="428.5" stroke-dasharray="1.25 1.29"/><line x1="910.6" x2="910.6" y1="92.7" y2="428.5"/><line x1="938.6" x2="938.6" y1="92.7" y2="428.5"/><line x1="958.5" x2="958.5" y1="92.7" y2="428.5"/><line x1="973.9" x2="973.9" y1="92.7" y2="428.5"/><line x1="986.5" x2="986.5" y1="92.7" y2="428.5"/><line x1="997.1" x2="997.1" y1="92.7" y2="428.5"/><line x1="1006.4" x2="1006.4" y1="92.7" y2="428.5"/><line x1="1014.5" x2="1014.5" y1="92.7" y2="428.5"/><line x1="78.5" x2="1014.4" y1="145.6" y2="145.6"/><line x1="78.5" x2="1014.4" y1="227.2" y2="227.2"/><line x1="78.5" x2="1014.4" y1="307.8" y2="307.8"/><line x1="78.5" x2="1014.4" y1="389.2" y2="389.2"/>
    </g>
    <g stroke="#a9c3cf" stroke-width="1.2"><line x1="69.0" x2="75.2" y1="145.6" y2="145.6"/><line x1="1014.4" x2="1020.4" y1="145.6" y2="145.6"/><line x1="69.0" x2="75.2" y1="227.2" y2="227.2"/><line x1="1014.4" x2="1020.4" y1="227.2" y2="227.2"/><line x1="69.0" x2="75.2" y1="307.8" y2="307.8"/><line x1="1014.4" x2="1020.4" y1="307.8" y2="307.8"/><line x1="69.0" x2="75.2" y1="389.2" y2="389.2"/><line x1="1014.4" x2="1020.4" y1="389.2" y2="389.2"/></g>
  </g>
  <path fill-rule="evenodd" fill="#ff8a35" d="M65.6,88.2H1023.8V431.8H65.6Z M69.0,91.5V428.5H1020.4V91.5Z"/>
</svg>

<svg class="full" width="1068" height="463" viewBox="0 0 1068 463">
  <!-- title icon -->
  <rect x="20" y="19" width="16" height="16" fill="#0a0a0a"/>
  <polygon points="20.8,27.8 26.4,24.6 27.2,29.8" fill="#39b6c8"/>
  <polygon points="25.8,25.2 28.6,23.6 30.7,20.3 31.8,24.5 34.2,28.8 31.2,28.3 28.4,33.2 26.4,33.2 26.2,29" fill="#e8501c"/>
  <polygon points="30.2,20.8 31.3,20.8 31.8,27.4 30.2,27.4" fill="#ffa040"/>
  <polygon points="26.3,33.3 28.3,33.1 29.4,29.4 27.2,30.2" fill="#ffa83c"/>
  <defs>
    <linearGradient id="gb" x1="0" y1="0" x2="0.8" y2="1"><stop offset="0" stop-color="#3d7fe4"/><stop offset="0.4" stop-color="#2561d0"/><stop offset="1" stop-color="#1a4db8"/></linearGradient>
    <linearGradient id="gr" x1="0" y1="0" x2="0.8" y2="1"><stop offset="0" stop-color="#f0805e"/><stop offset="0.4" stop-color="#e5512a"/><stop offset="1" stop-color="#c93c1a"/></linearGradient>
  </defs>
  <g stroke="#eef5ff" stroke-opacity="0.9" stroke-width="1.1">
    <rect x="982.6" y="17.6" width="20.6" height="20.1" rx="3.3" fill="url(#gb)"/>
    <rect x="1006.4" y="17.6" width="20.2" height="20.1" rx="3.3" fill="url(#gb)"/>
    <rect x="1030.4" y="17.6" width="19.8" height="20.1" rx="3.3" fill="url(#gr)"/>
  </g>
  <!-- title buttons glyphs -->
  <rect x="988" y="30" width="7" height="2.8" fill="#fff"/>
  <rect x="1011.5" y="23.6" width="10" height="8.8" fill="none" stroke="#fff" stroke-width="1.1"/>
  <rect x="1011" y="22.2" width="11" height="2.8" fill="#fff"/>
  <path d="M1035.2,22.6 L1045.4,32.6 M1045.4,22.6 L1035.2,32.6" stroke="#fff" stroke-width="1.9"/>

  <!-- toolbar bottom edge -->
  <rect x="18" y="66.8" width="1034.5" height="1" fill="#b3b6a6"/>
  <rect x="18" y="67.6" width="1034.5" height="1.3" fill="#c4e3f1"/>
  <rect x="18" y="68.9" width="1034.5" height="1.3" fill="#2a5fa6"/>
  <!-- toolbar separators -->
  <g stroke="#c2bfae" stroke-width="1.2">
    <path d="M68,43V66 M216.6,43V66 M342.2,43V66 M373.6,43V66 M476.2,43V66 M531,43V66"/>
  </g>
  <g stroke="#fbfaf3" stroke-width="1">
    <path d="M69.1,43V66 M217.7,43V66 M343.3,43V66 M374.7,43V66 M477.3,43V66 M532.1,43V66"/>
  </g>

  <!-- save (floppy) -->
  <rect x="22.1" y="46.2" width="13.8" height="14.3" fill="#15201a"/>
  <rect x="25" y="47.4" width="8.2" height="5.8" fill="#c9d5f5"/>
  <rect x="24.6" y="53.2" width="9" height="2.4" fill="#5a6468"/>
  <rect x="25" y="55.8" width="8.4" height="4.7" fill="#060808"/>
  <rect x="30.9" y="56.9" width="2" height="2.8" fill="#cfe2f7"/>

  <!-- print -->
  <polygon points="49.6,46 58.6,46 55.4,52.4 46.4,52.4" fill="#8b9090" stroke="#3a3f40" stroke-width="1.2"/>
  <path d="M51.2,48 L56.6,48 M50.2,50 L55.6,50" stroke="#c8cccc" stroke-width="0.9"/>
  <rect x="44.3" y="52.2" width="16.6" height="6.4" rx="2" fill="#464b4d"/>
  <rect x="45.8" y="55.9" width="10.6" height="1.4" fill="#e9f2dc"/>
  <rect x="57.6" y="53.6" width="1.8" height="1.6" fill="#9aa0a0"/>
  <rect x="46.2" y="58.4" width="12.4" height="2.2" fill="#7c8182"/>
  <rect x="46.2" y="60" width="12.4" height="0.8" fill="#3d4243"/>

  <!-- zoom in -->
  <g fill="none" stroke="#111" stroke-linecap="round">
    <circle cx="82.9" cy="50.4" r="5" fill="#f7f6ee" stroke-width="1.2"/>
    <path d="M79.9,50.4H85.9 M82.9,47.4V53.4" stroke-width="1.9" stroke-linecap="butt"/>
    <path d="M86.8,54.3 L91.4,58.8" stroke-width="2.1"/>
    <!-- zoom in horizontal -->
    <circle cx="106.6" cy="50.1" r="5" fill="#f7f6ee" stroke-width="1.2"/>
    <path d="M103.6,50.1H109.6 M106.6,47.1V53.1" stroke-width="1.9" stroke-linecap="butt"/>
    <path d="M110.5,54 L115.2,58.5" stroke-width="2.1"/>
    <path d="M101,60.9H113 M103.2,58.9 L101,60.9 L103.2,62.9 M110.8,58.9 L113,60.9 L110.8,62.9" stroke-width="1" stroke="#222"/>
    <!-- zoom out -->
    <circle cx="130.4" cy="50.4" r="5" fill="#f7f6ee" stroke-width="1.2"/>
    <path d="M127.4,50.4H133.4" stroke-width="1.9" stroke-linecap="butt"/>
    <path d="M134.3,54.3 L138.4,58.8" stroke-width="2.1"/>
  </g>

  <!-- hand -->
  <path d="M151.7,60.6 L146.5,52.8 C145.6,51.3 147.2,49.8 148.5,51 L150.3,53.2 L148.8,48.3 C148.3,46 150.6,45 151.5,46.9 L152.5,49.8 L152.6,45.7 C152.7,43.6 155.6,43.6 155.8,45.7 L156,49.6 L156.3,46.5 C156.6,44.6 159.1,44.8 159.1,46.8 L159.1,50.2 L159.5,48.6 C160.2,46.9 162.5,47.4 162.3,49.5 C162.2,53.2 161,56.4 159,60.6" fill="#fdfdfb" stroke="#1c1c1c" stroke-width="1.15" stroke-linejoin="round"/>

  <!-- zoom 100% -->
  <g fill="none" stroke="#111" stroke-linecap="round">
    <circle cx="176.9" cy="50.5" r="5.2" fill="#f7f6ee" stroke-width="1.15"/>
    <path d="M180.8,54.7 L185.2,59" stroke-width="2.1"/>
  </g>
  <g transform="translate(169.7,53.3) scale(0.8,1)" font-family="Liberation Sans, Arial, sans-serif" font-weight="bold" font-size="7.8"><text x="0" y="0" fill="#141414" stroke="#f7f6ee" stroke-width="1.3" paint-order="stroke" letter-spacing="0.3">100<tspan font-size="6.3" dy="-0.9" dx="0.4">%</tspan></text><text x="0" y="0" fill="#141414" letter-spacing="0.3">100<tspan font-size="6.3" dy="-0.9" dx="0.4">%</tspan></text></g>

  <!-- disabled zoom -->
  <g opacity="0.93">
    <rect x="192.4" y="45" width="17.6" height="10.2" fill="#a4afaf"/>
    <circle cx="200" cy="50.3" r="4.8" fill="#b4bdbd" stroke="#8f9b9c" stroke-width="1.3"/>
    <path d="M203.8,54.2 L208.8,58.8" stroke="#8e9a9b" stroke-width="2.1" stroke-linecap="round"/>
    <path d="M194,50.5H209" stroke="#8c9898" stroke-width="1.6" stroke-dasharray="1.6 1.1"/>
  </g>

  <!-- vertical cursors (red/blue) -->
  <path d="M223.1,50.7 L228.6,59.2 L236.7,45.2 L242.1,53.9" fill="none" stroke="#4f6fb4" stroke-width="1.05"/>
  <rect x="227.8" y="44.3" width="2.1" height="16" fill="#f2420f"/>
  <rect x="235.9" y="44.3" width="2.1" height="16" fill="#f2420f"/>
  <!-- horizontal cursors (purple/blue) -->
  <path d="M248.4,48.4H264.6 M248.4,56.7H264.6" stroke="#7a63d6" stroke-width="1.5"/>
  <path d="M247.3,51.5 L252.4,58.2 L260.1,46.8 L265.2,53.6" fill="none" stroke="#2f3d9e" stroke-width="1.25"/>

  <!-- disabled cursor icons -->
  <g stroke="#98a5a6" fill="none" stroke-width="1.1">
    <path d="M270,51 L275.4,58 L283.6,45 L289,55"/>
    <path d="M275.4,44.5V58 M283.6,44.5V58" stroke-width="1.7" stroke="#96a4a9"/>
    <rect x="270" y="57" width="19.4" height="4.6" fill="#9aa5a5" stroke="none"/>
    <path d="M293.6,47.8H312.4 M293.6,55.4H312.4" stroke-width="1.5" stroke="#96a4a9"/>
    <path d="M294,49 L299.6,55.2 L306.8,47.8 L312.4,55"/>
    <rect x="293.4" y="57" width="19.4" height="4.9" fill="#9aa5a5" stroke="none"/>
    <path d="M316.4,51 L321.8,58 L330,45 L335.6,55"/>
    <path d="M321.8,44.5V58 M330,44.5V58" stroke-width="1.7" stroke="#96a4a9"/>
    <rect x="316.2" y="57" width="19.8" height="4.6" fill="#9aa5a5" stroke="none"/>
  </g>
  <g stroke="#dfe4dc" stroke-width="0.8" opacity="0.8">
    <path d="M272.5,58.6V61.6 M275.5,58.6V61.6 M278.5,58.6V61.6 M281.5,58.6V61.6 M284.5,58.6V61.6 M287.5,58.6V61.6"/>
    <path d="M296,58.6V61.9 M299,58.6V61.9 M302,58.6V61.9 M305,58.6V61.9 M308,58.6V61.9 M311,58.6V61.9"/>
    <path d="M319,58.6V61.6 M322,58.6V61.6 M325,58.6V61.6 M328,58.6V61.6 M331,58.6V61.6 M334,58.6V61.6"/>
  </g>

  <!-- wrench -->
  <path d="M351.3,58.4 L359.6,50.2 C358.2,46.4 361.2,42.9 365,43.5 L362.4,46.6 L364,49 L367.5,47.6 C367.9,51.6 364.2,54 361.4,52.7 L353.6,60.7 C352,62.2 349.9,60 351.3,58.4 Z" fill="#fcfcfa" stroke="#1e1e1e" stroke-width="1.15" stroke-linejoin="round"/>

  <!-- fit vertical -->
  <rect x="383.1" y="44.8" width="14.2" height="15.6" fill="#8cb0e0" stroke="#1c2026" stroke-width="1.2"/>
  <rect x="382.5" y="44.2" width="15.4" height="1.8" fill="#1c2026"/>
  <path d="M390.2,47.6V58.4 M387.6,50.2 L390.2,47.4 L392.8,50.2 M387.6,55.8 L390.2,58.6 L392.8,55.8" fill="none" stroke="#0c0c0c" stroke-width="1.25"/>
  <!-- move up -->
  <rect x="406.8" y="45" width="14" height="6.6" fill="#8cb0e0" stroke="#1c2026" stroke-width="1.2"/>
  <rect x="406.2" y="44.2" width="15.2" height="1.8" fill="#1c2026"/>
  <path d="M413.8,61V54 M411.4,56.2 L413.8,53.4 L416.2,56.2" fill="none" stroke="#0c0c0c" stroke-width="1.2"/>
  <!-- move down -->
  <path d="M437.5,44.8V50.4 M435.1,48.4 L437.5,51 L439.9,48.4" fill="none" stroke="#0c0c0c" stroke-width="1.2"/>
  <rect x="430.3" y="53.6" width="14.2" height="6.8" fill="#8cb0e0" stroke="#1c2026" stroke-width="1.2"/>
  <rect x="429.7" y="52.8" width="15.4" height="1.8" fill="#1c2026"/>
  <!-- TOP -->
  <rect x="453.6" y="44.8" width="14.4" height="15.8" fill="#3a74c8" stroke="#1c2026" stroke-width="1.2"/>
  <rect x="453" y="44.2" width="15.6" height="1.8" fill="#1c2026"/>
  <text transform="translate(455,56.6) scale(0.62,1)" font-family="Liberation Sans, Arial, sans-serif" font-weight="bold" font-size="9.8" fill="#f3f7ff">TOP</text>

  <!-- 2 columns -->
  <rect x="483.2" y="44.4" width="17.8" height="17.3" fill="#6e6e6e"/>
  <rect x="484.8" y="45.9" width="5.9" height="14.3" fill="#fdfdfd"/>
  <rect x="493.5" y="45.9" width="5.9" height="14.3" fill="#fdfdfd"/>
  <path d="M483.9,45.1H500.3V61H483.9Z" fill="none" stroke="#3c3c3c" stroke-width="1.3"/>
  <!-- 2 rows -->
  <rect x="507" y="44.4" width="17.4" height="17.3" fill="#6e6e6e"/>
  <rect x="508.6" y="45.9" width="14.2" height="5.7" fill="#fdfdfd"/>
  <rect x="508.6" y="54.5" width="14.2" height="5.7" fill="#fdfdfd"/>
  <path d="M507.7,45.1H523.7V61H507.7Z" fill="none" stroke="#3c3c3c" stroke-width="1.3"/>

  <!-- view 1 (selected) -->
  <rect x="535.8" y="42.6" width="23" height="21" fill="#f4f7fb" stroke="#b9d3ea" stroke-width="1.1"/>
  <circle cx="546.5" cy="53.7" r="6.7" fill="#f07c18" stroke="#6b4a2a" stroke-width="1.1"/>
  <text x="546.5" y="57.2" text-anchor="middle" font-family="Liberation Sans, Arial, sans-serif" font-weight="bold" font-size="9.6" fill="#ffe9d0">1</text>
  <path d="M551.4,46.8H556 M553.7,44.5V49.1" stroke="#1b1b1b" stroke-width="1.1"/>
  <!-- view 2 -->
  <circle cx="570" cy="54.2" r="6.4" fill="#fbfbf7" stroke="#1b1b1b" stroke-width="1.15"/>
  <text x="570" y="57.7" text-anchor="middle" font-family="Liberation Sans, Arial, sans-serif" font-size="9.8" fill="#1b1b1b">2</text>
  <path d="M575,46.6H579.6 M577.3,44.3V48.9" stroke="#1b1b1b" stroke-width="1.1"/>

  <!-- side panel -->
  <g stroke="#6f9fd6" stroke-width="1">
    <path d="M1024.6,89.8H1043.8 M1024.6,110H1043.8 M1024.6,129.5H1043.8"/>
  </g>
  <circle cx="1034" cy="100" r="5.9" fill="#fbfbfb" stroke="#1d1d1d" stroke-width="1.2"/>
  <text x="1034" y="103.5" text-anchor="middle" font-family="Liberation Sans, Arial, sans-serif" font-weight="bold" font-size="9.6" fill="#1d1d1d">1</text>
  <rect x="1029.8" y="118.5" width="9.4" height="2.2" fill="#f5f9ff"/>
</svg>

<div class="lb" style="left:68.4px;top:75.2px"><span style="letter-spacing:.8px">Y:</span><b style="letter-spacing:.95px">Time</b></div>
<div class="lb" style="left:444.4px;top:75.2px;width:200px;text-align:center"><b style="letter-spacing:.18px">TIE1: Spectrum</b></div>
<div class="lb" style="left:880px;top:75.2px;width:140px;text-align:right"><span style="letter-spacing:.2px">X:</span><b style="letter-spacing:.35px">Freq</b></div>
<div class="lb" style="left:26.0px;top:433.8px;width:80px;text-align:center;letter-spacing:-0.2px">1kHz</div><div class="lb" style="left:185.1px;top:433.8px;width:80px;text-align:center;letter-spacing:-0.2px">10kHz</div><div class="lb" style="left:343.5px;top:433.8px;width:80px;text-align:center;letter-spacing:-0.2px">100kHz</div><div class="lb" style="left:504.3px;top:433.8px;width:80px;text-align:center;letter-spacing:-0.2px">1MHz</div><div class="lb" style="left:663.2px;top:433.8px;width:80px;text-align:center;letter-spacing:-0.2px">10MHz</div><div class="lb" style="left:822.2px;top:433.8px;width:80px;text-align:center;letter-spacing:-0.2px">100MHz</div>
<div class="lb" style="left:0px;top:139.00px;width:62px;text-align:right">10ns</div><div class="lb" style="left:0px;top:220.25px;width:62px;text-align:right">100ps</div><div class="lb" style="left:0px;top:300.65px;width:62px;text-align:right">1ps</div><div class="lb" style="left:0px;top:382.35px;width:62px;text-align:right">10fs</div>
</body>
</html>
